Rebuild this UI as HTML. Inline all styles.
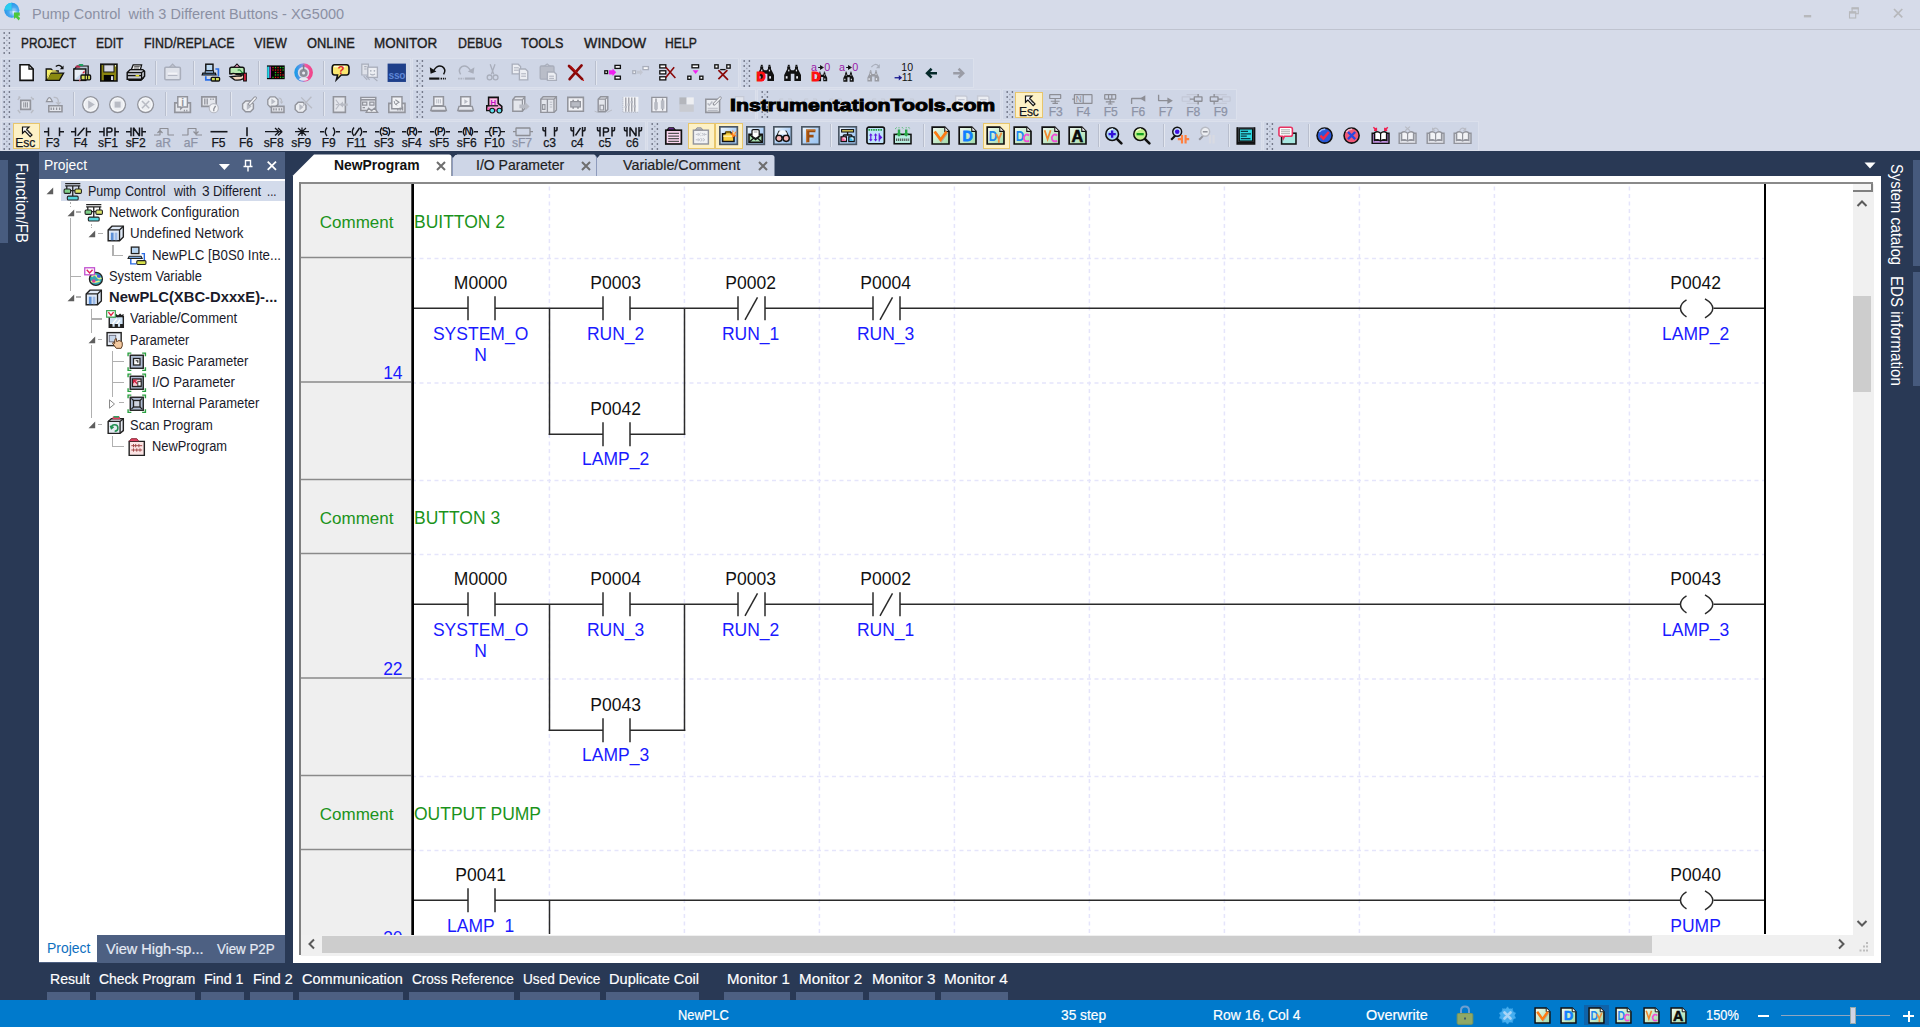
<!DOCTYPE html><html><head><meta charset="utf-8"><title>XG5000</title><style>
html,body{margin:0;padding:0;}
body{width:1920px;height:1027px;overflow:hidden;background:#d6dbe9;font-family:"Liberation Sans",sans-serif;position:relative;}
.t{position:absolute;white-space:nowrap;line-height:1;}
.c{position:absolute;white-space:nowrap;line-height:1;text-align:center;}
svg{position:absolute;overflow:visible;}
</style></head><body>
<div class="t" style="left:31.70px;top:7.1px;font-size:14.8px;color:#8b90a3;transform-origin:0 0;transform:scaleX(0.9788);">Pump Control&nbsp; with 3 Different Buttons - XG5000</div>
<svg style="left:3px;top:1px" width="20" height="21" viewBox="0 0 20 21"><defs><radialGradient id="gl" cx="0.62" cy="0.62" r="0.7"><stop offset="0" stop-color="#e8f4ff"/><stop offset="0.45" stop-color="#4aa8f0"/><stop offset="1" stop-color="#1a90e8"/></radialGradient></defs><circle cx="8.800" cy="9.200" r="7.500" fill="url(#gl)"/><path d="M8.800 1.700 A7.500 7.500 0 0 0 1.300 9.200 L8.800 9.200 Z" fill="#28d8f0" opacity="0.800"/><path d="M8.800 1.700 V16.700 M1.300 9.200 H16.300" stroke="#3aa0e8" stroke-width="0.600" opacity="0.700"/><path d="M11 11.500 h5.800 v3.200 h-2 l2.300 2.300 -1.300 2.500 -3 -3 -1.800 1.500z" fill="#4cc83c"/></svg>
<svg style="left:1790px;top:0" width="130" height="29" viewBox="0 0 130 29"><rect x="13.900" y="15" width="7.300" height="2.400" fill="#b7b8bc"/><rect x="62.100" y="8" width="6.200" height="5.700" fill="none" stroke="#b7b8bc" stroke-width="1.100"/><rect x="61.600" y="7.400" width="7.200" height="2" fill="#b7b8bc"/><rect x="59.500" y="12" width="6.200" height="6" fill="#d6dbe9" stroke="#b7b8bc" stroke-width="1.100"/><rect x="59" y="11.400" width="7.200" height="2.200" fill="#b7b8bc"/><path d="M104 9 l8.300 8.300 M112.300 9 l-8.300 8.300" stroke="#b7b8bc" stroke-width="1.700"/></svg>
<div style="position:absolute;left:0px;top:28.8px;width:1920px;height:1.2px;background:#bfc3cf;"></div>
<div class="t" style="left:21.00px;top:35.6px;font-size:14.3px;color:#1e1e1e;transform-origin:0 0;transform:scaleX(0.8271);-webkit-text-stroke:0.4px #1e1e1e;">PROJECT</div>
<div class="t" style="left:96.30px;top:35.6px;font-size:14.3px;color:#1e1e1e;transform-origin:0 0;transform:scaleX(0.8431);-webkit-text-stroke:0.4px #1e1e1e;">EDIT</div>
<div class="t" style="left:144.00px;top:35.6px;font-size:14.3px;color:#1e1e1e;transform-origin:0 0;transform:scaleX(0.8704);-webkit-text-stroke:0.4px #1e1e1e;">FIND/REPLACE</div>
<div class="t" style="left:254.00px;top:35.6px;font-size:14.3px;color:#1e1e1e;transform-origin:0 0;transform:scaleX(0.8959);-webkit-text-stroke:0.4px #1e1e1e;">VIEW</div>
<div class="t" style="left:306.70px;top:35.6px;font-size:14.3px;color:#1e1e1e;transform-origin:0 0;transform:scaleX(0.8981);-webkit-text-stroke:0.4px #1e1e1e;">ONLINE</div>
<div class="t" style="left:374.30px;top:35.6px;font-size:14.3px;color:#1e1e1e;transform-origin:0 0;transform:scaleX(0.9403);-webkit-text-stroke:0.4px #1e1e1e;">MONITOR</div>
<div class="t" style="left:457.70px;top:35.6px;font-size:14.3px;color:#1e1e1e;transform-origin:0 0;transform:scaleX(0.8670);-webkit-text-stroke:0.4px #1e1e1e;">DEBUG</div>
<div class="t" style="left:521.00px;top:35.6px;font-size:14.3px;color:#1e1e1e;transform-origin:0 0;transform:scaleX(0.8812);-webkit-text-stroke:0.4px #1e1e1e;">TOOLS</div>
<div class="t" style="left:584.00px;top:35.6px;font-size:14.3px;color:#1e1e1e;transform-origin:0 0;transform:scaleX(0.9920);-webkit-text-stroke:0.4px #1e1e1e;">WINDOW</div>
<div class="t" style="left:665.00px;top:35.6px;font-size:14.3px;color:#1e1e1e;transform-origin:0 0;transform:scaleX(0.8510);-webkit-text-stroke:0.4px #1e1e1e;">HELP</div>
<svg style="left:3.3px;top:32px" width="8" height="23" viewBox="0 0 8 23"><rect x="0.500" y="0.3" width="1.400" height="1.400" fill="#4d5263"/><rect x="5.700" y="0.3" width="1.400" height="1.400" fill="#4d5263"/><rect x="3.100" y="2.8" width="1.400" height="1.400" fill="#9ea4b4"/><rect x="0.500" y="5.3" width="1.400" height="1.400" fill="#4d5263"/><rect x="5.700" y="5.3" width="1.400" height="1.400" fill="#4d5263"/><rect x="3.100" y="7.8" width="1.400" height="1.400" fill="#9ea4b4"/><rect x="0.500" y="10.3" width="1.400" height="1.400" fill="#4d5263"/><rect x="5.700" y="10.3" width="1.400" height="1.400" fill="#4d5263"/><rect x="3.100" y="12.8" width="1.400" height="1.400" fill="#9ea4b4"/><rect x="0.500" y="15.3" width="1.400" height="1.400" fill="#4d5263"/><rect x="5.700" y="15.3" width="1.400" height="1.400" fill="#4d5263"/><rect x="3.100" y="17.8" width="1.400" height="1.400" fill="#9ea4b4"/><rect x="0.500" y="20.3" width="1.400" height="1.400" fill="#4d5263"/><rect x="5.700" y="20.3" width="1.400" height="1.400" fill="#4d5263"/></svg>
<div style="position:absolute;left:2px;top:59px;width:408px;height:28px;background:#cfd6e6;box-shadow:0 0 0 1px #dbe0ec;"></div>
<svg style="left:3px;top:60px" width="8" height="27" viewBox="0 0 8 27"><rect x="0.500" y="0.3" width="1.400" height="1.400" fill="#4d5263"/><rect x="5.700" y="0.3" width="1.400" height="1.400" fill="#4d5263"/><rect x="3.100" y="2.8" width="1.400" height="1.400" fill="#9ea4b4"/><rect x="0.500" y="5.3" width="1.400" height="1.400" fill="#4d5263"/><rect x="5.700" y="5.3" width="1.400" height="1.400" fill="#4d5263"/><rect x="3.100" y="7.8" width="1.400" height="1.400" fill="#9ea4b4"/><rect x="0.500" y="10.3" width="1.400" height="1.400" fill="#4d5263"/><rect x="5.700" y="10.3" width="1.400" height="1.400" fill="#4d5263"/><rect x="3.100" y="12.8" width="1.400" height="1.400" fill="#9ea4b4"/><rect x="0.500" y="15.3" width="1.400" height="1.400" fill="#4d5263"/><rect x="5.700" y="15.3" width="1.400" height="1.400" fill="#4d5263"/><rect x="3.100" y="17.8" width="1.400" height="1.400" fill="#9ea4b4"/><rect x="0.500" y="20.3" width="1.400" height="1.400" fill="#4d5263"/><rect x="5.700" y="20.3" width="1.400" height="1.400" fill="#4d5263"/><rect x="3.100" y="22.8" width="1.400" height="1.400" fill="#9ea4b4"/><rect x="0.500" y="25.3" width="1.400" height="1.400" fill="#4d5263"/><rect x="5.700" y="25.3" width="1.400" height="1.400" fill="#4d5263"/></svg>
<svg style="left:17.2px;top:63.2px" width="19.2" height="19.2" viewBox="0 0 16 16"><path d="M2.500 1.500 H10 L13.500 5 V14.500 H2.500z" fill="#fff" stroke="#111" stroke-width="1.300"/><path d="M10 1.500 V5 H13.500" fill="none" stroke="#111" stroke-width="1.100"/></svg>
<svg style="left:45.0px;top:63.2px" width="19.2" height="19.2" viewBox="0 0 16 16"><path d="M1 14.500 V5 H5 L6.500 6.500 H11 V8" fill="#f7f06a" stroke="#111" stroke-width="1.100"/><path d="M1 14.500 L4.500 8.500 H15.500 L12 14.500z" fill="#8a8a10" stroke="#111" stroke-width="1.100"/><path d="M2 13 L5 6.500 H9" fill="none" stroke="#f7f06a" stroke-width="1"/><path d="M9 3 Q12 0.500 14.500 4" fill="none" stroke="#111" stroke-width="1.100"/><path d="M15.500 2 V5.300 H12.300z" fill="#111"/></svg>
<svg style="left:72.4px;top:63.2px" width="19.2" height="19.2" viewBox="0 0 16 16"><path d="M2 5 L4.500 2.500 H13.500 V12" fill="#b9c6d6" stroke="#111" stroke-width="1"/><rect x="1.500" y="5" width="10" height="9.500" fill="#e8eef6" stroke="#111" stroke-width="1.200"/><path d="M2.500 13.500 L10.500 6 V13.500z" fill="#c8d8ee"/><path d="M10.500 6 L8.500 8.500 H10.500z" fill="#e02030"/><rect x="3" y="2" width="4" height="2" rx="1" fill="#b03050"/><rect x="5.500" y="0.800" width="4" height="1.600" rx="0.800" fill="#20a060"/><rect x="7.500" y="10" width="8" height="4" rx="0.800" fill="#d6e05a" stroke="#111" stroke-width="1.100"/><path d="M11 10 V14 M13 10 V14" stroke="#111" stroke-width="0.900"/><path d="M6.500 13 V15.500" stroke="#f08090" stroke-width="0.800"/></svg>
<svg style="left:99.2px;top:63.2px" width="19.2" height="19.2" viewBox="0 0 16 16"><rect x="1.500" y="1" width="13.500" height="14" fill="#8a8410" stroke="#111" stroke-width="1.300"/><rect x="4" y="1.500" width="8.500" height="6" fill="#d9dbe6" stroke="#111" stroke-width="0.800"/><rect x="4" y="10" width="8.500" height="5" fill="#050505"/><rect x="10" y="11" width="1.800" height="3.200" fill="#d9dbe6"/><rect x="13.300" y="1.800" width="0.900" height="1.100" fill="#fff"/></svg>
<svg style="left:126.4px;top:63.2px" width="19.2" height="19.2" viewBox="0 0 16 16"><path d="M4.500 5.500 L6 1.500 H13 L12 5.500z" fill="#fff" stroke="#111" stroke-width="1.100"/><path d="M6.800 3 H11.500 M6.500 4.200 H11" stroke="#555" stroke-width="0.800"/><path d="M1 8 L3.500 5.500 H14 L15.500 7 V11 L13 13.500 H1z" fill="#c6c9d2" stroke="#111" stroke-width="1.200"/><path d="M1 8 H13 V13.500 M13 8 L15.500 6.500" fill="none" stroke="#111" stroke-width="1"/><path d="M1 10.500 H13" stroke="#111" stroke-width="1.100"/><rect x="8" y="10" width="3" height="1.200" fill="#e8e020"/><path d="M2 14.500 H12.500 L15 12" fill="none" stroke="#111" stroke-width="1.100"/></svg>
<svg style="left:163.4px;top:63.2px" width="19.2" height="19.2" viewBox="0 0 16 16"><rect x="1.500" y="3.500" width="13" height="10.500" rx="1" fill="#dfe2ea" stroke="#a9aebb" stroke-width="1.300"/><path d="M5.500 3.500 L8 1 L10.500 3.500z" fill="#c3c7d2" stroke="#a9aebb" stroke-width="1"/><path d="M4 9 H12" stroke="#f2f3f7" stroke-width="2"/><path d="M4 10.300 H12" stroke="#a9aebb" stroke-width="0.800"/></svg>
<svg style="left:201.0px;top:63.2px" width="19.2" height="19.2" viewBox="0 0 16 16"><path d="M4 11 V14 H9 M12 5 H14.500 V11" fill="none" stroke="#2a6fe8" stroke-width="1.400"/><rect x="4" y="1" width="6" height="5.500" fill="#bcd9f2" stroke="#111" stroke-width="1.200"/><path d="M1.500 8.500 H12 L12.500 10 H1z" fill="#5a8fc8" stroke="#111" stroke-width="1"/><path d="M3.500 6.500 H10.500 V8.500 H3.500z" fill="#9fc3ea" stroke="#111" stroke-width="0.800"/><rect x="8.500" y="12" width="7" height="3" rx="0.800" fill="#d6e05a" stroke="#111" stroke-width="1.100"/><path d="M12 12 V15" stroke="#111" stroke-width="0.900"/></svg>
<svg style="left:228.4px;top:63.2px" width="19.2" height="19.2" viewBox="0 0 16 16"><path d="M1.500 5 Q1.500 3.500 3 3.500 H12 Q13.500 3.500 13.500 5 V9 H1.500z" fill="#b8e8b0" stroke="#111" stroke-width="1.200"/><path d="M5 3.500 L7.500 0.800 L10 3.500z" fill="#f0a0c0" stroke="#111" stroke-width="0.900"/><path d="M2 9 Q5 8 7 9.500 H10 Q11.500 9.500 11 11 H8 M11 10.500 L13 9.500 V13 Q9 15 5.500 14 L2 11.500z" fill="#f6d8c0" stroke="#111" stroke-width="1.100"/><path d="M8 6 Q10 5 11 7 T13 7" fill="none" stroke="#2a8a40" stroke-width="1"/><rect x="13" y="8.500" width="2.300" height="6.500" fill="#e02040" stroke="#111" stroke-width="0.900"/></svg>
<svg style="left:266.0px;top:63.2px" width="19.2" height="19.2" viewBox="0 0 16 16"><rect x="0.800" y="2" width="14.800" height="11.500" fill="#050505"/><rect x="1" y="3" width="1.800" height="9.500" fill="#20d8e8"/><rect x="3" y="3" width="1" height="9.500" fill="#d040d0"/><rect x="5.30" y="3.30" width="1.050" height="1.050" fill="#e81818"/><rect x="7.40" y="3.30" width="1.050" height="1.050" fill="#20c820"/><rect x="9.50" y="3.30" width="1.050" height="1.050" fill="#e81818"/><rect x="11.60" y="3.30" width="1.050" height="1.050" fill="#20c820"/><rect x="13.70" y="3.30" width="1.050" height="1.050" fill="#20c820"/><rect x="5.30" y="5.35" width="1.050" height="1.050" fill="#e81818"/><rect x="7.40" y="5.35" width="1.050" height="1.050" fill="#e81818"/><rect x="9.50" y="5.35" width="1.050" height="1.050" fill="#e81818"/><rect x="11.60" y="5.35" width="1.050" height="1.050" fill="#e81818"/><rect x="13.70" y="5.35" width="1.050" height="1.050" fill="#20c820"/><rect x="5.30" y="7.40" width="1.050" height="1.050" fill="#050505"/><rect x="7.40" y="7.40" width="1.050" height="1.050" fill="#20c820"/><rect x="9.50" y="7.40" width="1.050" height="1.050" fill="#e81818"/><rect x="11.60" y="7.40" width="1.050" height="1.050" fill="#e81818"/><rect x="13.70" y="7.40" width="1.050" height="1.050" fill="#050505"/><rect x="5.30" y="9.45" width="1.050" height="1.050" fill="#050505"/><rect x="7.40" y="9.45" width="1.050" height="1.050" fill="#20c820"/><rect x="9.50" y="9.45" width="1.050" height="1.050" fill="#20c820"/><rect x="11.60" y="9.45" width="1.050" height="1.050" fill="#e81818"/><rect x="13.70" y="9.45" width="1.050" height="1.050" fill="#e81818"/><rect x="5.30" y="11.50" width="1.050" height="1.050" fill="#20c820"/><rect x="7.40" y="11.50" width="1.050" height="1.050" fill="#e81818"/><rect x="9.50" y="11.50" width="1.050" height="1.050" fill="#e81818"/><rect x="11.60" y="11.50" width="1.050" height="1.050" fill="#20c820"/><rect x="13.70" y="11.50" width="1.050" height="1.050" fill="#20c820"/></svg>
<svg style="left:294.1px;top:63.2px" width="19.2" height="19.2" viewBox="0 0 16 16"><defs><linearGradient id="rg" x1="0" x2="1" y1="0" y2="0"><stop offset="0" stop-color="#1e9be8"/><stop offset="0.45" stop-color="#8d8fe0"/><stop offset="0.62" stop-color="#f05aa0"/><stop offset="1" stop-color="#f0468c"/></linearGradient></defs><circle cx="8" cy="8" r="6.300" fill="#d8dde8" stroke="url(#rg)" stroke-width="3"/><path d="M4 13.800 Q8 16 12 13.800 L11 12.500 H5z" fill="#e6e9f0"/><circle cx="8" cy="8.300" r="3.400" fill="#8b8e98"/><circle cx="8" cy="8.300" r="1.300" fill="#e8ebf2"/><path d="M8 1.500 V6" stroke="#7a7d88" stroke-width="1.300"/></svg>
<svg style="left:331.0px;top:63.2px" width="19.2" height="19.2" viewBox="0 0 16 16"><path d="M3 1.500 H13 Q15 1.500 15 4 V7.500 Q15 10 13 10 H8.500 L4.500 14 L5.500 10 H3 Q1 10 1 7.500 V4 Q1 1.500 3 1.500z" fill="#fbe870" stroke="#111" stroke-width="1.300"/><path d="M2.500 3 H12" stroke="#fffbe0" stroke-width="1.200"/><text x="8.3" y="9" font-family="Liberation Sans, sans-serif" font-size="9.5" fill="#e02828" text-anchor="middle" font-weight="bold">?</text></svg>
<svg style="left:359.8px;top:63.2px" width="19.2" height="19.2" viewBox="0 0 16 16"><path d="M1.500 1 H7 V10 H1.500z M3.500 3 H5.500 M3.500 5 H5.500" fill="#dfe2ea" stroke="#a9aebb" stroke-width="1"/><rect x="6.500" y="3.500" width="8" height="8.500" fill="#eceef3" stroke="#a9aebb" stroke-width="1.100"/><circle cx="9" cy="6.500" r="0.700" fill="#a9aebb"/><circle cx="12" cy="6.500" r="0.700" fill="#a9aebb"/><path d="M8.500 9 Q10.500 10.800 12.500 9" fill="none" stroke="#a9aebb" stroke-width="0.900"/><path d="M3 11 L6 14 M5 11 L8 14 M11 12 L14.500 15" stroke="#a9aebb" stroke-width="0.900"/></svg>
<svg style="left:387.3px;top:63.2px" width="19.2" height="19.2" viewBox="0 0 16 16"><rect x="0.500" y="0.500" width="15.300" height="15.300" fill="#1e3f8a"/><text x="8.2" y="13" font-family="Liberation Sans, sans-serif" font-size="8.5" fill="#5f86d6" text-anchor="middle" font-weight="bold" letter-spacing="-0.3">sso</text></svg>
<div style="position:absolute;left:155.0px;top:61px;width:1px;height:24px;background:#b9bfce;"></div>
<div style="position:absolute;left:156.0px;top:61px;width:1px;height:24px;background:#e3e7f0;"></div>
<div style="position:absolute;left:192.7px;top:61px;width:1px;height:24px;background:#b9bfce;"></div>
<div style="position:absolute;left:193.7px;top:61px;width:1px;height:24px;background:#e3e7f0;"></div>
<div style="position:absolute;left:257.5px;top:61px;width:1px;height:24px;background:#b9bfce;"></div>
<div style="position:absolute;left:258.5px;top:61px;width:1px;height:24px;background:#e3e7f0;"></div>
<div style="position:absolute;left:322.5px;top:61px;width:1px;height:24px;background:#b9bfce;"></div>
<div style="position:absolute;left:323.5px;top:61px;width:1px;height:24px;background:#e3e7f0;"></div>
<div style="position:absolute;left:413px;top:59px;width:324.5px;height:28px;background:#cfd6e6;box-shadow:0 0 0 1px #dbe0ec;"></div>
<svg style="left:416px;top:60px" width="8" height="27" viewBox="0 0 8 27"><rect x="0.500" y="0.3" width="1.400" height="1.400" fill="#4d5263"/><rect x="5.700" y="0.3" width="1.400" height="1.400" fill="#4d5263"/><rect x="3.100" y="2.8" width="1.400" height="1.400" fill="#9ea4b4"/><rect x="0.500" y="5.3" width="1.400" height="1.400" fill="#4d5263"/><rect x="5.700" y="5.3" width="1.400" height="1.400" fill="#4d5263"/><rect x="3.100" y="7.8" width="1.400" height="1.400" fill="#9ea4b4"/><rect x="0.500" y="10.3" width="1.400" height="1.400" fill="#4d5263"/><rect x="5.700" y="10.3" width="1.400" height="1.400" fill="#4d5263"/><rect x="3.100" y="12.8" width="1.400" height="1.400" fill="#9ea4b4"/><rect x="0.500" y="15.3" width="1.400" height="1.400" fill="#4d5263"/><rect x="5.700" y="15.3" width="1.400" height="1.400" fill="#4d5263"/><rect x="3.100" y="17.8" width="1.400" height="1.400" fill="#9ea4b4"/><rect x="0.500" y="20.3" width="1.400" height="1.400" fill="#4d5263"/><rect x="5.700" y="20.3" width="1.400" height="1.400" fill="#4d5263"/><rect x="3.100" y="22.8" width="1.400" height="1.400" fill="#9ea4b4"/><rect x="0.500" y="25.3" width="1.400" height="1.400" fill="#4d5263"/><rect x="5.700" y="25.3" width="1.400" height="1.400" fill="#4d5263"/></svg>
<svg style="left:428.4px;top:63.2px" width="19.2" height="19.2" viewBox="0 0 16 16"><path d="M4.500 6.500 Q8 1 12 3 Q15.500 5.500 13 9.500" fill="none" stroke="#111" stroke-width="1.200"/><path d="M1.500 3.500 L2.200 9 L7 7z" fill="#111"/><path d="M1 13 H9.500" stroke="#111" stroke-width="1.800"/><path d="M10.500 13 H15" stroke="#111" stroke-width="1.400" stroke-dasharray="1.200 0.700"/></svg>
<svg style="left:456.9px;top:63.2px" width="19.2" height="19.2" viewBox="0 0 16 16"><path d="M11.500 6.500 Q8 1 4 3 Q0.500 5.500 3 9.500" fill="none" stroke="#a9aebb" stroke-width="1.200"/><path d="M14.500 3.500 L13.800 9 L9 7z" fill="#a9aebb"/><path d="M6.500 13 H15" stroke="#a9aebb" stroke-width="1.800"/><path d="M1 13 H5.500" stroke="#a9aebb" stroke-width="1.400" stroke-dasharray="1.200 0.700"/></svg>
<svg style="left:483.4px;top:63.2px" width="19.2" height="19.2" viewBox="0 0 16 16"><path d="M6 1 L9 9.500 M10 1 L7 9.500" stroke="#a9aebb" stroke-width="1.100" fill="none"/><circle cx="5.500" cy="12" r="2" fill="none" stroke="#a9aebb" stroke-width="1.100"/><circle cx="10.500" cy="12" r="2" fill="none" stroke="#a9aebb" stroke-width="1.100"/></svg>
<svg style="left:511.0px;top:63.2px" width="19.2" height="19.2" viewBox="0 0 16 16"><path d="M1 1 H6 L8 3 V9 H1z" fill="#eceef3" stroke="#a9aebb" stroke-width="1.100"/><path d="M2.500 4 H6.500 M2.500 6 H6.500" stroke="#a9aebb" stroke-width="0.800"/><path d="M7 5 H12 L14 7 V14 H7z" fill="#eceef3" stroke="#a9aebb" stroke-width="1.100"/><path d="M8.500 9 H12.500 M8.500 11 H12.500" stroke="#a9aebb" stroke-width="0.800"/></svg>
<svg style="left:538.8px;top:63.2px" width="19.2" height="19.2" viewBox="0 0 16 16"><rect x="1" y="2.500" width="11.500" height="11" rx="1" fill="#b9bdc8" stroke="#a9aebb" stroke-width="1.100"/><path d="M4.500 2.500 L6.800 0.800 L9 2.500z" fill="#dfe2ea" stroke="#a9aebb" stroke-width="0.900"/><path d="M7 7.500 H12.500 L14.500 9.500 V14.500 H7z" fill="#eceef3" stroke="#a9aebb" stroke-width="1.100"/><path d="M8.500 11 H12.500 M8.500 12.800 H12.500" stroke="#a9aebb" stroke-width="0.800"/></svg>
<svg style="left:566.4px;top:63.2px" width="19.2" height="19.2" viewBox="0 0 16 16"><path d="M2.500 2.500 L13.500 13.500 M13 2 L3 13.500" stroke="#8a0808" stroke-width="2.200" stroke-linecap="round" fill="none"/><path d="M3.500 2.500 L9 8" stroke="#b01010" stroke-width="1.200"/><circle cx="14.500" cy="14.500" r="0.600" fill="#d02020"/></svg>
<svg style="left:603.4px;top:63.2px" width="19.2" height="19.2" viewBox="0 0 16 16"><rect x="1.5" y="6.5" width="2.3" height="2.3" fill="#fff" stroke="#111" stroke-width="1.100"/><rect x="10" y="2" width="4.5" height="2.5" fill="#fff" stroke="#111" stroke-width="1.100"/><rect x="10" y="11" width="4.5" height="2.5" fill="#fff" stroke="#111" stroke-width="1.100"/><path d="M5 6 H8 V4.500 L11 7.800 L8 11 V9.500 H5z" fill="#f020f0"/></svg>
<svg style="left:631.0px;top:63.2px" width="19.2" height="19.2" viewBox="0 0 16 16"><rect x="1.5" y="6.5" width="2.3" height="2.3" fill="#fff" stroke="#a9aebb" stroke-width="1.100"/><rect x="10" y="3" width="4.5" height="2.5" fill="#fff" stroke="#a9aebb" stroke-width="1.100"/><path d="M5 6.500 H7.500 V5 L10 7.800 L7.500 10.500 V9 H5z" fill="#c3c7d2"/></svg>
<svg style="left:657.9px;top:63.2px" width="19.2" height="19.2" viewBox="0 0 16 16"><rect x="1.5" y="1.5" width="5" height="2.6" fill="#fff" stroke="#111" stroke-width="1.100"/><rect x="1.5" y="6.5" width="5" height="2.6" fill="#fff" stroke="#111" stroke-width="1.100"/><rect x="1.5" y="11.5" width="5" height="2.6" fill="#fff" stroke="#111" stroke-width="1.100"/><path d="M6.500 3.500 L14.500 12.500 M13.500 3.500 L6.500 12" stroke="#8a0808" stroke-width="1.300"/></svg>
<svg style="left:686.0px;top:63.2px" width="19.2" height="19.2" viewBox="0 0 16 16"><rect x="5" y="1.5" width="5.5" height="2.5" fill="#fff" stroke="#111" stroke-width="1.100"/><rect x="1.5" y="11" width="2.6" height="2.6" fill="#fff" stroke="#111" stroke-width="1.100"/><rect x="11.5" y="11" width="2.6" height="2.6" fill="#fff" stroke="#111" stroke-width="1.100"/><path d="M5.500 6 H10.500 L8 9.200z" fill="#f020f0"/></svg>
<svg style="left:713.4px;top:63.2px" width="19.2" height="19.2" viewBox="0 0 16 16"><rect x="1.5" y="1.5" width="2.8" height="2.8" fill="#fff" stroke="#111" stroke-width="1.100"/><rect x="11.5" y="1.5" width="2.8" height="2.8" fill="#fff" stroke="#111" stroke-width="1.100"/><path d="M6 5.500 H10.500" stroke="#111" stroke-width="1.100"/><path d="M4.500 6 L12.500 14 M12 6 L4.500 13.500" stroke="#8a0808" stroke-width="1.400"/></svg>
<div style="position:absolute;left:595.1px;top:61px;width:1px;height:24px;background:#b9bfce;"></div>
<div style="position:absolute;left:596.1px;top:61px;width:1px;height:24px;background:#e3e7f0;"></div>
<div style="position:absolute;left:740.5px;top:59px;width:232.0px;height:28px;background:#cfd6e6;box-shadow:0 0 0 1px #dbe0ec;"></div>
<svg style="left:743px;top:60px" width="8" height="27" viewBox="0 0 8 27"><rect x="0.500" y="0.3" width="1.400" height="1.400" fill="#4d5263"/><rect x="5.700" y="0.3" width="1.400" height="1.400" fill="#4d5263"/><rect x="3.100" y="2.8" width="1.400" height="1.400" fill="#9ea4b4"/><rect x="0.500" y="5.3" width="1.400" height="1.400" fill="#4d5263"/><rect x="5.700" y="5.3" width="1.400" height="1.400" fill="#4d5263"/><rect x="3.100" y="7.8" width="1.400" height="1.400" fill="#9ea4b4"/><rect x="0.500" y="10.3" width="1.400" height="1.400" fill="#4d5263"/><rect x="5.700" y="10.3" width="1.400" height="1.400" fill="#4d5263"/><rect x="3.100" y="12.8" width="1.400" height="1.400" fill="#9ea4b4"/><rect x="0.500" y="15.3" width="1.400" height="1.400" fill="#4d5263"/><rect x="5.700" y="15.3" width="1.400" height="1.400" fill="#4d5263"/><rect x="3.100" y="17.8" width="1.400" height="1.400" fill="#9ea4b4"/><rect x="0.500" y="20.3" width="1.400" height="1.400" fill="#4d5263"/><rect x="5.700" y="20.3" width="1.400" height="1.400" fill="#4d5263"/><rect x="3.100" y="22.8" width="1.400" height="1.400" fill="#9ea4b4"/><rect x="0.500" y="25.3" width="1.400" height="1.400" fill="#4d5263"/><rect x="5.700" y="25.3" width="1.400" height="1.400" fill="#4d5263"/></svg>
<svg style="left:756.0px;top:63.2px" width="19.2" height="19.2" viewBox="0 0 16 16"><g transform="translate(0 0) scale(1.0)"><path d="M3.500 3 H6 V5 L7 6 H9 L10 5 V3 H12.500 V5 L15 10 V15 H9.500 V9 H6.500 V15 H1 V10 L3.500 5z" fill="#111"/><rect x="4" y="1.500" width="1.600" height="1.500" fill="#111"/><rect x="10.400" y="1.500" width="1.600" height="1.500" fill="#111"/><rect x="2.300" y="11" width="1.500" height="2" fill="#e9ecf3"/><rect x="11" y="11" width="1.500" height="2" fill="#e9ecf3"/><rect x="4.300" y="5.500" width="1" height="1.500" fill="#e9ecf3"/><rect x="10.700" y="5.500" width="1" height="1.500" fill="#e9ecf3"/></g><text x="4.3" y="15.3" font-family="Liberation Sans, sans-serif" font-size="10.5" fill="#ff1010" text-anchor="middle" font-weight="bold" stroke="#ff1010" stroke-width="0.900" font-family="Liberation Serif, serif">D</text></svg>
<svg style="left:783.4px;top:63.2px" width="19.2" height="19.2" viewBox="0 0 16 16"><g transform="translate(0 0) scale(1.0)"><path d="M3.500 3 H6 V5 L7 6 H9 L10 5 V3 H12.500 V5 L15 10 V15 H9.500 V9 H6.500 V15 H1 V10 L3.500 5z" fill="#111"/><rect x="4" y="1.500" width="1.600" height="1.500" fill="#111"/><rect x="10.400" y="1.500" width="1.600" height="1.500" fill="#111"/><rect x="2.300" y="11" width="1.500" height="2" fill="#e9ecf3"/><rect x="11" y="11" width="1.500" height="2" fill="#e9ecf3"/><rect x="4.300" y="5.500" width="1" height="1.500" fill="#e9ecf3"/><rect x="10.700" y="5.500" width="1" height="1.500" fill="#e9ecf3"/></g></svg>
<svg style="left:811.4px;top:63.2px" width="19.2" height="19.2" viewBox="0 0 16 16"><g transform="translate(4.5 6.3) scale(0.6)"><path d="M3.500 3 H6 V5 L7 6 H9 L10 5 V3 H12.500 V5 L15 10 V15 H9.500 V9 H6.500 V15 H1 V10 L3.500 5z" fill="#111"/><rect x="4" y="1.500" width="1.600" height="1.500" fill="#111"/><rect x="10.400" y="1.500" width="1.600" height="1.500" fill="#111"/><rect x="2.300" y="11" width="1.500" height="2" fill="#e9ecf3"/><rect x="11" y="11" width="1.500" height="2" fill="#e9ecf3"/><rect x="4.300" y="5.500" width="1" height="1.500" fill="#e9ecf3"/><rect x="10.700" y="5.500" width="1" height="1.500" fill="#e9ecf3"/></g><text x="4" y="15.3" font-family="Liberation Sans, sans-serif" font-size="10" fill="#ff1010" text-anchor="middle" font-weight="bold" stroke="#ff1010" stroke-width="0.900" font-family="Liberation Serif, serif">D</text><text x="2.6" y="6.3" font-family="Liberation Sans, sans-serif" font-size="9" fill="#9a1aa8" text-anchor="middle" >a</text><text x="13.6" y="6.3" font-family="Liberation Sans, sans-serif" font-size="9" fill="#9a1aa8" text-anchor="middle" >0</text><path d="M6 3.800 H8.500 M8 2.500 L10 3.800 L8 5.100z" stroke="#111" stroke-width="0.900" fill="#111"/></svg>
<svg style="left:839.1px;top:63.2px" width="19.2" height="19.2" viewBox="0 0 16 16"><g transform="translate(3 6.3) scale(0.62)"><path d="M3.500 3 H6 V5 L7 6 H9 L10 5 V3 H12.500 V5 L15 10 V15 H9.500 V9 H6.500 V15 H1 V10 L3.500 5z" fill="#111"/><rect x="4" y="1.500" width="1.600" height="1.500" fill="#111"/><rect x="10.400" y="1.500" width="1.600" height="1.500" fill="#111"/><rect x="2.300" y="11" width="1.500" height="2" fill="#e9ecf3"/><rect x="11" y="11" width="1.500" height="2" fill="#e9ecf3"/><rect x="4.300" y="5.500" width="1" height="1.500" fill="#e9ecf3"/><rect x="10.700" y="5.500" width="1" height="1.500" fill="#e9ecf3"/></g><text x="2.6" y="6.3" font-family="Liberation Sans, sans-serif" font-size="9" fill="#9a1aa8" text-anchor="middle" >a</text><text x="13.6" y="6.3" font-family="Liberation Sans, sans-serif" font-size="9" fill="#9a1aa8" text-anchor="middle" >0</text><path d="M6 3.800 H8.500 M8 2.500 L10 3.800 L8 5.100z" stroke="#111" stroke-width="0.900" fill="#111"/></svg>
<svg style="left:866.4px;top:63.2px" width="19.2" height="19.2" viewBox="0 0 16 16"><g transform="translate(0.5 5) scale(0.7)"><path d="M3.500 3 H6 V5 L7 6 H9 L10 5 V3 H12.500 V5 L15 10 V15 H9.500 V9 H6.500 V15 H1 V10 L3.500 5z" fill="#9a9ca4"/><rect x="4" y="1.500" width="1.600" height="1.500" fill="#9a9ca4"/><rect x="10.400" y="1.500" width="1.600" height="1.500" fill="#9a9ca4"/><rect x="2.300" y="11" width="1.500" height="2" fill="#e9ecf3"/><rect x="11" y="11" width="1.500" height="2" fill="#e9ecf3"/><rect x="4.300" y="5.500" width="1" height="1.500" fill="#e9ecf3"/><rect x="10.700" y="5.500" width="1" height="1.500" fill="#e9ecf3"/></g><path d="M4.500 3.500 Q7.500 -0.500 10.500 2.500" fill="none" stroke="#a9aebb" stroke-width="1"/><path d="M11.500 0.800 V4.300 H8.300z" fill="#a9aebb"/></svg>
<svg style="left:894.4px;top:63.2px" width="19.2" height="19.2" viewBox="0 0 16 16"><text x="11" y="6.8" font-family="Liberation Sans, sans-serif" font-size="8.8" fill="#111" text-anchor="middle" >10</text><text x="11" y="15.3" font-family="Liberation Sans, sans-serif" font-size="8.8" fill="#111" text-anchor="middle" >11</text><path d="M0.500 12.300 H5.500" stroke="#1a1a90" stroke-width="1.100"/><path d="M4 10.100 L6.800 12.300 L4 14.500z" fill="#1a1a90"/></svg>
<svg style="left:921.9px;top:63.2px" width="19.2" height="19.2" viewBox="0 0 16 16"><path d="M12.500 8.500 H5 M8 4.800 L4.200 8.500 L8 12.200" fill="none" stroke="#062a2a" stroke-width="2.100"/></svg>
<svg style="left:949.1px;top:63.2px" width="19.2" height="19.2" viewBox="0 0 16 16"><path d="M3.500 8.500 H11 M8 4.800 L11.800 8.500 L8 12.200" fill="none" stroke="#9a9ca6" stroke-width="2.100"/></svg>
<div style="position:absolute;left:2px;top:90px;width:408px;height:28.5px;background:#cfd6e6;box-shadow:0 0 0 1px #dbe0ec;"></div>
<svg style="left:3px;top:91px" width="8" height="27" viewBox="0 0 8 27"><rect x="0.500" y="0.3" width="1.400" height="1.400" fill="#4d5263"/><rect x="5.700" y="0.3" width="1.400" height="1.400" fill="#4d5263"/><rect x="3.100" y="2.8" width="1.400" height="1.400" fill="#9ea4b4"/><rect x="0.500" y="5.3" width="1.400" height="1.400" fill="#4d5263"/><rect x="5.700" y="5.3" width="1.400" height="1.400" fill="#4d5263"/><rect x="3.100" y="7.8" width="1.400" height="1.400" fill="#9ea4b4"/><rect x="0.500" y="10.3" width="1.400" height="1.400" fill="#4d5263"/><rect x="5.700" y="10.3" width="1.400" height="1.400" fill="#4d5263"/><rect x="3.100" y="12.8" width="1.400" height="1.400" fill="#9ea4b4"/><rect x="0.500" y="15.3" width="1.400" height="1.400" fill="#4d5263"/><rect x="5.700" y="15.3" width="1.400" height="1.400" fill="#4d5263"/><rect x="3.100" y="17.8" width="1.400" height="1.400" fill="#9ea4b4"/><rect x="0.500" y="20.3" width="1.400" height="1.400" fill="#4d5263"/><rect x="5.700" y="20.3" width="1.400" height="1.400" fill="#4d5263"/><rect x="3.100" y="22.8" width="1.400" height="1.400" fill="#9ea4b4"/><rect x="0.500" y="25.3" width="1.400" height="1.400" fill="#4d5263"/><rect x="5.700" y="25.3" width="1.400" height="1.400" fill="#4d5263"/></svg>
<svg style="left:16.4px;top:94.6px" width="19.2" height="19.2" viewBox="0 0 16 16"><path d="M4 4.500 H12 V12 H4z" fill="#e4e6ec" stroke="#92949c" stroke-width="1.4"/><path d="M6.500 6 V10.500 M8 6 V10.500 M9.500 6 V10.500" stroke="#92949c" stroke-width="0.900"/><path d="M1.500 4 L3.500 1.500 M3.500 1.500 L2 1.800 M12.500 1.500 L14.500 4 M14.500 4 L14.300 2.500 M14.500 12.500 L12.500 15 M1.500 12.500 L3.500 15" stroke="#b8bbc4" stroke-width="1.100" fill="none"/></svg>
<svg style="left:44.4px;top:94.6px" width="19.2" height="19.2" viewBox="0 0 16 16"><path d="M2 5.500 H7 L6 3.500 Q4.500 1 3 3.500z" fill="#e4e6ec" stroke="#92949c" stroke-width="1"/><path d="M8 2 Q12 1.500 12 6" fill="none" stroke="#b8bbc4" stroke-width="1.100"/><path d="M9.500 6 H14.500 L12 8.500z" fill="#b8bbc4"/><path d="M4 9 H15 V14 H4z" fill="#e4e6ec" stroke="#92949c" stroke-width="1.3"/><path d="M6 10.500 V12.500 M8 10.500 V12.500 M10.500 10.500 V12.500 M13 10.500 V12.500" stroke="#92949c" stroke-width="1.100"/></svg>
<svg style="left:81.0px;top:94.6px" width="19.2" height="19.2" viewBox="0 0 16 16"><circle cx="8" cy="8" r="6.600" fill="#eceef2" stroke="#92949c" stroke-width="1.100"/><circle cx="8" cy="8" r="5.300" fill="none" stroke="#f6f7f9" stroke-width="1"/><path d="M6 4.500 V11.500 L11.500 8z" fill="#b8bbc4"/></svg>
<svg style="left:108.4px;top:94.6px" width="19.2" height="19.2" viewBox="0 0 16 16"><circle cx="8" cy="8" r="6.600" fill="#eceef2" stroke="#92949c" stroke-width="1.100"/><circle cx="8" cy="8" r="5.300" fill="none" stroke="#f6f7f9" stroke-width="1"/><rect x="5.500" y="5.500" width="5" height="5" fill="#b8bbc4"/></svg>
<svg style="left:136.0px;top:94.6px" width="19.2" height="19.2" viewBox="0 0 16 16"><circle cx="8" cy="8" r="6.600" fill="#eceef2" stroke="#92949c" stroke-width="1.100"/><circle cx="8" cy="8" r="5.300" fill="none" stroke="#f6f7f9" stroke-width="1"/><path d="M5 5 L11 11 M11 5 L5 11" stroke="#b8bbc4" stroke-width="1.300"/></svg>
<svg style="left:173.4px;top:94.6px" width="19.2" height="19.2" viewBox="0 0 16 16"><path d="M1.500 6.500 H14.500 V14.500 H1.500z" fill="#e4e6ec" stroke="#92949c" stroke-width="1.4"/><path d="M4 1.500 H12 V10 H8 L6.500 11.500 V10 H4z" fill="#f2f3f6" stroke="#92949c" stroke-width="1.2"/><text x="8" y="8.8" font-family="Liberation Sans, sans-serif" font-size="8.5" fill="#92949c" text-anchor="middle" font-weight="bold" font-family="Liberation Serif, serif">i</text><path d="M9 13 H13" stroke="#92949c" stroke-width="1.400" stroke-dasharray="1 1"/></svg>
<svg style="left:200.4px;top:94.6px" width="19.2" height="19.2" viewBox="0 0 16 16"><path d="M1.500 1.500 H13.500 V9.500 H1.500z" fill="#e4e6ec" stroke="#92949c" stroke-width="1.4"/><path d="M4 3 V8 M6 3 V8" stroke="#92949c" stroke-width="1.100"/><path d="M8.500 3.500 H11.500" stroke="#92949c" stroke-width="1.200" stroke-dasharray="1 1"/><circle cx="11.500" cy="11" r="3.800" fill="#f2f3f6" stroke="#b8bbc4" stroke-width="1"/><path d="M11.500 11.500 L13 9 M11.500 11.500 V13.500" stroke="#92949c" stroke-width="1.100"/></svg>
<svg style="left:239.1px;top:94.6px" width="19.2" height="19.2" viewBox="0 0 16 16"><path d="M5.500 5 H9.500 L12 7.500 V11.500 L9.500 14 H5.500 L3 11.500 V7.500z" fill="#eceef2" stroke="#92949c" stroke-width="1.200"/><path d="M6.500 6.500 V12.500 L10.500 9.500z" fill="#b8bbc4"/><path d="M9 7.500 L13.500 2.500" stroke="#92949c" stroke-width="2.800" stroke-linecap="round"/><path d="M9 7.500 L13.500 2.500" stroke="#f2f3f6" stroke-width="1.300" stroke-linecap="round"/></svg>
<svg style="left:266.4px;top:94.6px" width="19.2" height="19.2" viewBox="0 0 16 16"><path d="M3.500 1.500 H7.500 L10 4 V8 L7.500 10 H3.500 L1.500 8 V4z" fill="#eceef2" stroke="#92949c" stroke-width="1.100"/><path d="M4.500 3 V8 L8 5.500z" fill="#b8bbc4"/><path d="M10.500 2.500 Q13 2.500 13 5.500" fill="none" stroke="#b8bbc4" stroke-width="1"/><path d="M11.500 5.500 H14.500 L13 7.500z" fill="#b8bbc4"/><path d="M4.500 9.500 H15 V14.500 H4.500z" fill="#e4e6ec" stroke="#92949c" stroke-width="1.3"/><path d="M6.500 11 V13 M8.500 11 V13 M11 11 V13 M13 11 V13" stroke="#92949c" stroke-width="1.100"/></svg>
<svg style="left:294.1px;top:94.6px" width="19.2" height="19.2" viewBox="0 0 16 16"><path d="M3.500 6 H7.500 L10 8.500 V12 L7.500 14.500 H3.500 L1 12 V8.500z" fill="#eceef2" stroke="#92949c" stroke-width="1.200"/><path d="M4.500 7.500 V13 L8 10z" fill="#b8bbc4"/><path d="M6 2 L15 11 M14.500 1.500 L7.500 9" stroke="#b8bbc4" stroke-width="1.100"/></svg>
<svg style="left:331.0px;top:94.6px" width="19.2" height="19.2" viewBox="0 0 16 16"><path d="M2 1.500 H12 V14.500 H2z" fill="#e4e6ec" stroke="#92949c" stroke-width="1.3"/><path d="M4 4 L7 8 L4 12 M4 8 H6" stroke="#b8bbc4" stroke-width="0.900" fill="none"/><path d="M7 8 L10 5.500 V7 H14 V9 H10 V10.500z" fill="#b8bbc4"/></svg>
<svg style="left:359.1px;top:94.6px" width="19.2" height="19.2" viewBox="0 0 16 16"><path d="M1.500 2 H14 V13 H1.500z" fill="#e4e6ec" stroke="#92949c" stroke-width="1.2"/><path d="M1.500 4 H14" stroke="#92949c" stroke-width="1.300"/><path d="M3 6 H6.500 V8.500 H3z M9 6 H12.500 V8.500 H9z M3 10.500 H5" stroke="#92949c" stroke-width="1" fill="none"/><path d="M6 14.500 L8 11 L10.500 13 L13 11 L15.500 14.500z" fill="#f2f3f6" stroke="#92949c" stroke-width="1.1"/></svg>
<svg style="left:387.3px;top:94.6px" width="19.2" height="19.2" viewBox="0 0 16 16"><path d="M1.500 7 H15 V14.500 H1.500z" fill="#e4e6ec" stroke="#92949c" stroke-width="1.3"/><path d="M4 1.500 H12.500 V11.500 H4z" fill="#f2f3f6" stroke="#92949c" stroke-width="1.2"/><path d="M7 4 L10 6 L7 8" fill="none" stroke="#92949c" stroke-width="0.900"/><path d="M6 5 Q5.500 7.500 8.500 8.500" fill="none" stroke="#92949c" stroke-width="0.800"/><path d="M9 13 V11 M11 13 V10.500 M13 13 V9.500" stroke="#92949c" stroke-width="1.100"/></svg>
<div style="position:absolute;left:72.5px;top:92px;width:1px;height:24px;background:#b9bfce;"></div>
<div style="position:absolute;left:73.5px;top:92px;width:1px;height:24px;background:#e3e7f0;"></div>
<div style="position:absolute;left:165.1px;top:92px;width:1px;height:24px;background:#b9bfce;"></div>
<div style="position:absolute;left:166.1px;top:92px;width:1px;height:24px;background:#e3e7f0;"></div>
<div style="position:absolute;left:230.1px;top:92px;width:1px;height:24px;background:#b9bfce;"></div>
<div style="position:absolute;left:231.1px;top:92px;width:1px;height:24px;background:#e3e7f0;"></div>
<div style="position:absolute;left:322.5px;top:92px;width:1px;height:24px;background:#b9bfce;"></div>
<div style="position:absolute;left:323.5px;top:92px;width:1px;height:24px;background:#e3e7f0;"></div>
<div style="position:absolute;left:413px;top:90px;width:342px;height:28.5px;background:#cfd6e6;box-shadow:0 0 0 1px #dbe0ec;"></div>
<svg style="left:416px;top:91px" width="8" height="27" viewBox="0 0 8 27"><rect x="0.500" y="0.3" width="1.400" height="1.400" fill="#4d5263"/><rect x="5.700" y="0.3" width="1.400" height="1.400" fill="#4d5263"/><rect x="3.100" y="2.8" width="1.400" height="1.400" fill="#9ea4b4"/><rect x="0.500" y="5.3" width="1.400" height="1.400" fill="#4d5263"/><rect x="5.700" y="5.3" width="1.400" height="1.400" fill="#4d5263"/><rect x="3.100" y="7.8" width="1.400" height="1.400" fill="#9ea4b4"/><rect x="0.500" y="10.3" width="1.400" height="1.400" fill="#4d5263"/><rect x="5.700" y="10.3" width="1.400" height="1.400" fill="#4d5263"/><rect x="3.100" y="12.8" width="1.400" height="1.400" fill="#9ea4b4"/><rect x="0.500" y="15.3" width="1.400" height="1.400" fill="#4d5263"/><rect x="5.700" y="15.3" width="1.400" height="1.400" fill="#4d5263"/><rect x="3.100" y="17.8" width="1.400" height="1.400" fill="#9ea4b4"/><rect x="0.500" y="20.3" width="1.400" height="1.400" fill="#4d5263"/><rect x="5.700" y="20.3" width="1.400" height="1.400" fill="#4d5263"/><rect x="3.100" y="22.8" width="1.400" height="1.400" fill="#9ea4b4"/><rect x="0.500" y="25.3" width="1.400" height="1.400" fill="#4d5263"/><rect x="5.700" y="25.3" width="1.400" height="1.400" fill="#4d5263"/></svg>
<svg style="left:429.1px;top:94.6px" width="19.2" height="19.2" viewBox="0 0 16 16"><path d="M4 1.500 H12 V9 H4z" fill="#f0f1f5" stroke="#92949c" stroke-width="1.3"/><path d="M6.500 3.500 V7 M8 3.500 V7 M9.500 3.500 V7" stroke="#b8bbc4" stroke-width="0.800"/><path d="M2.500 9.500 H13.500 L14.500 13 H1.500z" fill="#e4e6ec" stroke="#92949c" stroke-width="1.2"/><path d="M2 13.500 H14" stroke="#92949c" stroke-width="1.100"/></svg>
<svg style="left:456.4px;top:94.6px" width="19.2" height="19.2" viewBox="0 0 16 16"><path d="M4 1.500 H12 V9 H4z" fill="#f0f1f5" stroke="#92949c" stroke-width="1.3"/><path d="M7 3.500 V7.500 L10 5.500z" fill="#b8bbc4"/><path d="M2.500 9.500 H13.500 L14.500 13 H1.500z" fill="#e4e6ec" stroke="#92949c" stroke-width="1.2"/><path d="M2 13.500 H14" stroke="#92949c" stroke-width="1.100"/></svg>
<svg style="left:484.8px;top:94.6px" width="19.2" height="19.2" viewBox="0 0 16 16"><path d="M3 9 V2 H11 V7 L14 9.500 V13 H1.500 V9z" fill="#f8a8d8" stroke="#111" stroke-width="1.300"/><rect x="4.500" y="3.500" width="5" height="4.500" fill="#fbd0ec"/><text x="7" y="8" font-family="Liberation Sans, sans-serif" font-size="6.5" fill="#c010c0" text-anchor="middle" font-weight="bold">H</text><path d="M3 9 H11" stroke="#111" stroke-width="1"/><rect x="2" y="10.500" width="2" height="2" fill="#f060b0"/><circle cx="6" cy="13" r="2" fill="#60e0f0" stroke="#111" stroke-width="0.900"/><circle cx="12" cy="13" r="2" fill="#60e0f0" stroke="#111" stroke-width="0.900"/><circle cx="9" cy="12.500" r="0.800" fill="#e040a0"/></svg>
<svg style="left:511.0px;top:94.6px" width="19.2" height="19.2" viewBox="0 0 16 16"><path d="M1.500 4 L3.500 1.500 H11.500 V11 L9.500 13.500 H1.500z" fill="#e4e6ec" stroke="#92949c" stroke-width="1.2"/><path d="M1.500 4 H9.500 V13.500 M9.500 4 L11.500 1.500" fill="none" stroke="#92949c" stroke-width="1"/><path d="M7 8 H12 V6 L15.500 9.500 L12 13 V11 H7z" fill="#b8bbc4"/></svg>
<svg style="left:539.1px;top:94.6px" width="19.2" height="19.2" viewBox="0 0 16 16"><path d="M1.500 3.500 L3.500 1.500 H14.500 V12.500 L12.500 14.500 H1.500z" fill="#e4e6ec" stroke="#92949c" stroke-width="1.2"/><path d="M1.500 3.500 H12.500 V14.500 M12.500 3.500 L14.500 1.500 M7 3.500 V14.500" fill="none" stroke="#92949c" stroke-width="1.100"/><path d="M3 8 H5 V12 H3z" fill="none" stroke="#92949c" stroke-width="0.900"/><path d="M9 6 H11 M9 8 H11 M9 10 H11" stroke="#b8bbc4" stroke-width="0.800"/></svg>
<svg style="left:566.0px;top:94.6px" width="19.2" height="19.2" viewBox="0 0 16 16"><path d="M1.500 2 H14.500 V13.500 H1.500z" fill="#f0f1f5" stroke="#92949c" stroke-width="1.3"/><rect x="4" y="5.500" width="8" height="4.500" fill="#b8bbc4" stroke="#92949c" stroke-width="1"/><path d="M6 4 V5.500 M10 4 V5.500 M6 10 V11.500 M10 10 V11.500" stroke="#92949c" stroke-width="1.400"/></svg>
<svg style="left:594.4px;top:94.6px" width="19.2" height="19.2" viewBox="0 0 16 16"><path d="M3.500 3.500 L5.500 1.500 H11.500 V12 L9.500 14 H3.500z" fill="#e4e6ec" stroke="#92949c" stroke-width="1.2"/><path d="M3.500 3.500 H9.500 V14 M9.500 3.500 L11.500 1.500" fill="none" stroke="#92949c" stroke-width="1"/><rect x="5" y="8.500" width="3" height="4" fill="none" stroke="#92949c" stroke-width="0.900"/><path d="M0.500 13.500 L3 14.500 M11 14.500 L15 12.500" stroke="#b8bbc4" stroke-width="0.800"/></svg>
<svg style="left:621.4px;top:94.6px" width="19.2" height="19.2" viewBox="0 0 16 16"><rect x="2" y="1.500" width="12.500" height="12.500" fill="#f3f4f7"/><path d="M4 2 V14 M6.500 2 V14 M9 2 V14 M11.500 2 V14" stroke="#92949c" stroke-width="1"/><path d="M3 10 H5 M5.500 8 H7.500 M8 6 H10 M10.500 9.500 H12.500" stroke="#b8bbc4" stroke-width="1.800"/><path d="M1.500 2 V14 M2 14.500 H14.500" stroke="#b8bbc4" stroke-width="0.800" stroke-dasharray="0.800 0.800"/></svg>
<svg style="left:649.8px;top:94.6px" width="19.2" height="19.2" viewBox="0 0 16 16"><path d="M1.500 2 H14 V14 H1.500z" fill="#f0f1f5" stroke="#92949c" stroke-width="1.1"/><path d="M5 3 V13 M10.500 3 V13" stroke="#92949c" stroke-width="1.100"/><rect x="3.500" y="6" width="3" height="6" fill="#b8bbc4"/><rect x="9" y="4.500" width="3" height="7" fill="#b8bbc4"/></svg>
<svg style="left:677.4px;top:94.6px" width="19.2" height="19.2" viewBox="0 0 16 16"><rect x="2" y="2" width="6" height="6" fill="#b4b6bc"/><rect x="8" y="2" width="6" height="6" fill="#eeeff2"/><rect x="2" y="8" width="12" height="6" fill="#c9cbd1"/></svg>
<svg style="left:704.1px;top:94.6px" width="19.2" height="19.2" viewBox="0 0 16 16"><path d="M1.500 3.500 H13 V14.500 H1.500z" fill="#eceef2" stroke="#92949c" stroke-width="1.3"/><path d="M3 7 L4.500 8.500 L7 5.500" fill="none" stroke="#b8bbc4" stroke-width="1.300"/><path d="M3 11 H11.500 M3 12.800 H11.500" stroke="#b8bbc4" stroke-width="0.900"/><path d="M8.500 7.500 L13.500 2.500" stroke="#92949c" stroke-width="2.600" stroke-linecap="round"/><path d="M8.800 7.200 L13.500 2.500" stroke="#f2f3f6" stroke-width="1.200" stroke-linecap="round"/></svg>
<div style="position:absolute;left:758px;top:90px;width:242px;height:28.5px;background:#cfd6e6;box-shadow:0 0 0 1px #dbe0ec;"></div>
<svg style="left:761px;top:91px" width="8" height="27" viewBox="0 0 8 27"><rect x="0.500" y="0.3" width="1.400" height="1.400" fill="#4d5263"/><rect x="5.700" y="0.3" width="1.400" height="1.400" fill="#4d5263"/><rect x="3.100" y="2.8" width="1.400" height="1.400" fill="#9ea4b4"/><rect x="0.500" y="5.3" width="1.400" height="1.400" fill="#4d5263"/><rect x="5.700" y="5.3" width="1.400" height="1.400" fill="#4d5263"/><rect x="3.100" y="7.8" width="1.400" height="1.400" fill="#9ea4b4"/><rect x="0.500" y="10.3" width="1.400" height="1.400" fill="#4d5263"/><rect x="5.700" y="10.3" width="1.400" height="1.400" fill="#4d5263"/><rect x="3.100" y="12.8" width="1.400" height="1.400" fill="#9ea4b4"/><rect x="0.500" y="15.3" width="1.400" height="1.400" fill="#4d5263"/><rect x="5.700" y="15.3" width="1.400" height="1.400" fill="#4d5263"/><rect x="3.100" y="17.8" width="1.400" height="1.400" fill="#9ea4b4"/><rect x="0.500" y="20.3" width="1.400" height="1.400" fill="#4d5263"/><rect x="5.700" y="20.3" width="1.400" height="1.400" fill="#4d5263"/><rect x="3.100" y="22.8" width="1.400" height="1.400" fill="#9ea4b4"/><rect x="0.500" y="25.3" width="1.400" height="1.400" fill="#4d5263"/><rect x="5.700" y="25.3" width="1.400" height="1.400" fill="#4d5263"/></svg>
<svg style="left:733.4px;top:92.6px" width="19.2" height="19.2" viewBox="0 0 16 16"><path d="M2 3 H9 V8 H2z" fill="#e1e4ec" stroke="#c6cad6" stroke-width="0.900"/></svg>
<svg style="left:776.4px;top:92.6px" width="19.2" height="19.2" viewBox="0 0 16 16"><path d="M3 5 H6 M3 5 V12 H6 M13 5 H10 M13 5 V12 H10" fill="none" stroke="#c6cad6" stroke-width="0.900"/></svg>
<svg style="left:801.4px;top:92.6px" width="19.2" height="19.2" viewBox="0 0 16 16"><path d="M3 5 H6 M3 5 V12 H6 M13 5 H10 M13 5 V12 H10" fill="none" stroke="#c6cad6" stroke-width="0.900"/></svg>
<svg style="left:826.4px;top:92.6px" width="19.2" height="19.2" viewBox="0 0 16 16"><path d="M3 5 H6 M3 5 V12 H6 M13 5 H10 M13 5 V12 H10" fill="none" stroke="#c6cad6" stroke-width="0.900"/></svg>
<svg style="left:869.4px;top:92.6px" width="19.2" height="19.2" viewBox="0 0 16 16"><path d="M3 5 H6 M3 5 V12 H6 M13 5 H10 M13 5 V12 H10" fill="none" stroke="#c6cad6" stroke-width="0.900"/></svg>
<svg style="left:898.4px;top:92.6px" width="19.2" height="19.2" viewBox="0 0 16 16"><path d="M3 5 H6 M3 5 V12 H6 M13 5 H10 M13 5 V12 H10" fill="none" stroke="#c6cad6" stroke-width="0.900"/></svg>
<svg style="left:952.4px;top:92.6px" width="19.2" height="19.2" viewBox="0 0 16 16"><path d="M3 2.500 H11 Q12.500 2.500 12.500 4 V14 H3z" fill="#eceef3" stroke="#c6cad6" stroke-width="1.200"/><path d="M5 5.500 H10.500 M5 8 H10.500" stroke="#c6cad6" stroke-width="0.900"/></svg>
<svg style="left:974.4px;top:92.6px" width="19.2" height="19.2" viewBox="0 0 16 16"><path d="M3 2.500 H11 Q12.500 2.500 12.500 4 V14 H3z" fill="#eceef3" stroke="#c6cad6" stroke-width="1.200"/><path d="M5 5.500 H10.500 M5 8 H10.500" stroke="#c6cad6" stroke-width="0.900"/></svg>
<div class="t" style="left:729.85px;top:97.3px;font-size:16.2px;color:#000;transform-origin:0 0;transform:scaleX(1.3129);font-weight:bold;-webkit-text-stroke:0.9px #000;">InstrumentationTools.com</div>
<div style="position:absolute;left:1003px;top:90px;width:232.5999999999999px;height:28.5px;background:#cfd6e6;box-shadow:0 0 0 1px #dbe0ec;"></div>
<svg style="left:1006px;top:91px" width="8" height="27" viewBox="0 0 8 27"><rect x="0.500" y="0.3" width="1.400" height="1.400" fill="#4d5263"/><rect x="5.700" y="0.3" width="1.400" height="1.400" fill="#4d5263"/><rect x="3.100" y="2.8" width="1.400" height="1.400" fill="#9ea4b4"/><rect x="0.500" y="5.3" width="1.400" height="1.400" fill="#4d5263"/><rect x="5.700" y="5.3" width="1.400" height="1.400" fill="#4d5263"/><rect x="3.100" y="7.8" width="1.400" height="1.400" fill="#9ea4b4"/><rect x="0.500" y="10.3" width="1.400" height="1.400" fill="#4d5263"/><rect x="5.700" y="10.3" width="1.400" height="1.400" fill="#4d5263"/><rect x="3.100" y="12.8" width="1.400" height="1.400" fill="#9ea4b4"/><rect x="0.500" y="15.3" width="1.400" height="1.400" fill="#4d5263"/><rect x="5.700" y="15.3" width="1.400" height="1.400" fill="#4d5263"/><rect x="3.100" y="17.8" width="1.400" height="1.400" fill="#9ea4b4"/><rect x="0.500" y="20.3" width="1.400" height="1.400" fill="#4d5263"/><rect x="5.700" y="20.3" width="1.400" height="1.400" fill="#4d5263"/><rect x="3.100" y="22.8" width="1.400" height="1.400" fill="#9ea4b4"/><rect x="0.500" y="25.3" width="1.400" height="1.400" fill="#4d5263"/><rect x="5.700" y="25.3" width="1.400" height="1.400" fill="#4d5263"/></svg>
<div style="position:absolute;left:1015px;top:91.5px;width:27.5px;height:26.0px;background:#fdf1c6;border:1.500px solid #e8c66c;box-sizing:border-box;"></div>
<svg style="left:1016.7px;top:95.0px" width="24" height="12" viewBox="0 0 24 12"><path d="M8.500 1 h6.500 l-2.300 2.300 5.300 5.600 -1.800 1.700 -5.300 -5.600 -2.400 2.300z" fill="#fff" stroke="#111" stroke-width="1.200"/><path d="M12.500 4.500 l4.800 5" stroke="#111" stroke-width="0.800" stroke-dasharray="1 1"/></svg>
<div class="c" style="left:1013.9px;width:30px;top:105.8px;font-size:12.100px;color:#14161c;letter-spacing:-0.1px;-webkit-text-stroke:0.25px #14161c;">Esc</div>
<svg style="left:1042.4px;top:93.3px" width="26.400" height="13.200" viewBox="0 0 24 12"><path d="M7 1.500 H17 V5 H7z M12 5 V9.500 M8 7.500 H16 M9.500 9.500 H14.500" fill="none" stroke="#8d8e95" stroke-width="1.1" stroke-linejoin="bevel" /></svg>
<div class="c" style="left:1040.8px;width:30px;top:105.8px;font-size:12.100px;color:#8d93a6;letter-spacing:-0.1px;-webkit-text-stroke:0.25px #8d93a6;">F3</div>
<svg style="left:1069.8px;top:93.3px" width="26.400" height="13.200" viewBox="0 0 24 12"><path d="M4 1.500 H20 V9.500 H4z M12 1.500 V9.500 M2 5.500 H4" fill="none" stroke="#8d8e95" stroke-width="1.1" stroke-linejoin="bevel" /><text x="8" y="8.5" font-family="Liberation Sans, sans-serif" font-size="7.5" fill="#8d8e95" text-anchor="middle" >N</text></svg>
<div class="c" style="left:1068.2px;width:30px;top:105.8px;font-size:12.100px;color:#8d93a6;letter-spacing:-0.1px;-webkit-text-stroke:0.25px #8d93a6;">F4</div>
<svg style="left:1097.4px;top:93.3px" width="26.400" height="13.200" viewBox="0 0 24 12"><path d="M7 1.500 H17 V5.500 H7z M10.500 1.500 V5.500 M13.500 1.500 V5.500 M12 5.500 V10 M8 8 H16 M10 10 H14" fill="none" stroke="#8d8e95" stroke-width="1.1" stroke-linejoin="bevel" /></svg>
<div class="c" style="left:1095.8px;width:30px;top:105.8px;font-size:12.100px;color:#8d93a6;letter-spacing:-0.1px;-webkit-text-stroke:0.25px #8d93a6;">F5</div>
<svg style="left:1124.8px;top:93.3px" width="26.400" height="13.200" viewBox="0 0 24 12"><path d="M6 10 V5 H15" fill="none" stroke="#8d8e95" stroke-width="1.2" stroke-linejoin="bevel" /><path d="M18.500 2 V8 L13.500 5z" fill="#8d8e95"/></svg>
<div class="c" style="left:1123.2px;width:30px;top:105.8px;font-size:12.100px;color:#8d93a6;letter-spacing:-0.1px;-webkit-text-stroke:0.25px #8d93a6;">F6</div>
<svg style="left:1152.4px;top:93.3px" width="26.400" height="13.200" viewBox="0 0 24 12"><path d="M6 1.500 V7 H15" fill="none" stroke="#8d8e95" stroke-width="1.2" stroke-linejoin="bevel" /><path d="M14 4 V10 L19 7z" fill="#8d8e95"/></svg>
<div class="c" style="left:1150.8px;width:30px;top:105.8px;font-size:12.100px;color:#8d93a6;letter-spacing:-0.1px;-webkit-text-stroke:0.25px #8d93a6;">F7</div>
<svg style="left:1179.8px;top:93.3px" width="26.400" height="13.200" viewBox="0 0 24 12"><path d="M2 3.500 H9 V7.500 H2z M6 1.500 H17 M6 9.500 H17" fill="none" stroke="#c3c8d6" stroke-width="1.1" stroke-linejoin="bevel" /><path d="M13 3.500 H20 V7.500 H13z M16.500 1 V3.500 M16.500 7.500 V10.500 M9 5.500 H13" fill="none" stroke="#8d8e95" stroke-width="1.2" stroke-linejoin="bevel" /></svg>
<div class="c" style="left:1178.2px;width:30px;top:105.8px;font-size:12.100px;color:#8d93a6;letter-spacing:-0.1px;-webkit-text-stroke:0.25px #8d93a6;">F8</div>
<svg style="left:1207.4px;top:93.3px" width="26.400" height="13.200" viewBox="0 0 24 12"><path d="M14 3.500 H21 V7.500 H14z M7 1.500 H18 M7 9.500 H18" fill="none" stroke="#c3c8d6" stroke-width="1.1" stroke-linejoin="bevel" /><path d="M3 3.500 H10 V7.500 H3z M6.500 1 V3.500 M6.500 7.500 V10.500 M10 5.500 H14" fill="none" stroke="#8d8e95" stroke-width="1.2" stroke-linejoin="bevel" /></svg>
<div class="c" style="left:1205.8px;width:30px;top:105.8px;font-size:12.100px;color:#8d93a6;letter-spacing:-0.1px;-webkit-text-stroke:0.25px #8d93a6;">F9</div>
<div style="position:absolute;left:2px;top:121.5px;width:643px;height:28.0px;background:#cfd6e6;box-shadow:0 0 0 1px #dbe0ec;"></div>
<svg style="left:3px;top:122.5px" width="8" height="27" viewBox="0 0 8 27"><rect x="0.500" y="0.3" width="1.400" height="1.400" fill="#4d5263"/><rect x="5.700" y="0.3" width="1.400" height="1.400" fill="#4d5263"/><rect x="3.100" y="2.8" width="1.400" height="1.400" fill="#9ea4b4"/><rect x="0.500" y="5.3" width="1.400" height="1.400" fill="#4d5263"/><rect x="5.700" y="5.3" width="1.400" height="1.400" fill="#4d5263"/><rect x="3.100" y="7.8" width="1.400" height="1.400" fill="#9ea4b4"/><rect x="0.500" y="10.3" width="1.400" height="1.400" fill="#4d5263"/><rect x="5.700" y="10.3" width="1.400" height="1.400" fill="#4d5263"/><rect x="3.100" y="12.8" width="1.400" height="1.400" fill="#9ea4b4"/><rect x="0.500" y="15.3" width="1.400" height="1.400" fill="#4d5263"/><rect x="5.700" y="15.3" width="1.400" height="1.400" fill="#4d5263"/><rect x="3.100" y="17.8" width="1.400" height="1.400" fill="#9ea4b4"/><rect x="0.500" y="20.3" width="1.400" height="1.400" fill="#4d5263"/><rect x="5.700" y="20.3" width="1.400" height="1.400" fill="#4d5263"/><rect x="3.100" y="22.8" width="1.400" height="1.400" fill="#9ea4b4"/><rect x="0.500" y="25.3" width="1.400" height="1.400" fill="#4d5263"/><rect x="5.700" y="25.3" width="1.400" height="1.400" fill="#4d5263"/></svg>
<div style="position:absolute;left:12.5px;top:122.5px;width:27.5px;height:26.0px;background:#fdf1c6;border:1.500px solid #e8c66c;box-sizing:border-box;"></div>
<svg style="left:14.0px;top:126.0px" width="24" height="12" viewBox="0 0 24 12"><path d="M8.500 1 h6.500 l-2.300 2.300 5.300 5.600 -1.800 1.700 -5.300 -5.600 -2.400 2.300z" fill="#fff" stroke="#111" stroke-width="1.200"/><path d="M12.500 4.500 l4.800 5" stroke="#111" stroke-width="0.800" stroke-dasharray="1 1"/></svg>
<div class="c" style="left:10.2px;width:30px;top:136.8px;font-size:12.100px;color:#14161c;letter-spacing:-0.1px;-webkit-text-stroke:0.25px #14161c;">Esc</div>
<svg style="left:41.6px;top:126.0px" width="24" height="12" viewBox="0 0 24 12"><path d="M2 5.7 H6.500 M6.500 1.500 V10.300 M17.500 1.500 V10.300 M17.500 5.7 H22" fill="none" stroke="#14161c" stroke-width="1.5" stroke-linejoin="bevel" /></svg>
<div class="c" style="left:37.8px;width:30px;top:136.8px;font-size:12.100px;color:#14161c;letter-spacing:-0.1px;-webkit-text-stroke:0.25px #14161c;">F3</div>
<svg style="left:69.2px;top:126.0px" width="24" height="12" viewBox="0 0 24 12"><path d="M2 5.7 H6.500 M6.500 1.500 V10.300 M17.500 1.500 V10.300 M17.500 5.7 H22 M8.500 9.800 L15.500 1.800" fill="none" stroke="#14161c" stroke-width="1.5" stroke-linejoin="bevel" /></svg>
<div class="c" style="left:65.4px;width:30px;top:136.8px;font-size:12.100px;color:#14161c;letter-spacing:-0.1px;-webkit-text-stroke:0.25px #14161c;">F4</div>
<svg style="left:96.8px;top:126.0px" width="24" height="12" viewBox="0 0 24 12"><path d="M2 5.7 H7 M7 1.500 V10.300 M18 1.500 V10.300 M18 5.7 H22 M10 10.300 V2 H13 Q15 2 15 4 Q15 6 13 6 H10" fill="none" stroke="#14161c" stroke-width="1.5" stroke-linejoin="bevel" /></svg>
<div class="c" style="left:93.0px;width:30px;top:136.8px;font-size:12.100px;color:#14161c;letter-spacing:-0.1px;-webkit-text-stroke:0.25px #14161c;">sF1</div>
<svg style="left:124.4px;top:126.0px" width="24" height="12" viewBox="0 0 24 12"><path d="M2 5.7 H7 M7 1.500 V10.300 M18 1.500 V10.300 M18 5.7 H22 M9.500 10.300 V1.800 L15.500 10 V1.500" fill="none" stroke="#14161c" stroke-width="1.5" stroke-linejoin="bevel" /></svg>
<div class="c" style="left:120.6px;width:30px;top:136.8px;font-size:12.100px;color:#14161c;letter-spacing:-0.1px;-webkit-text-stroke:0.25px #14161c;">sF2</div>
<svg style="left:152.0px;top:126.0px" width="24" height="12" viewBox="0 0 24 12"><path d="M2 9 H8 V2.500 H16 V9 H22 M5.500 7 L8 4.500 L10.500 7" fill="none" stroke="#8d8e95" stroke-width="1.2" stroke-linejoin="bevel" /></svg>
<div class="c" style="left:148.2px;width:30px;top:136.8px;font-size:12.100px;color:#8d93a6;letter-spacing:-0.1px;-webkit-text-stroke:0.25px #8d93a6;">aR</div>
<svg style="left:179.6px;top:126.0px" width="24" height="12" viewBox="0 0 24 12"><path d="M2 9 H8 V2.500 H16 V9 H22 M13.500 5.500 L16 8 L18.500 5.500" fill="none" stroke="#8d8e95" stroke-width="1.2" stroke-linejoin="bevel" /></svg>
<div class="c" style="left:175.8px;width:30px;top:136.8px;font-size:12.100px;color:#8d93a6;letter-spacing:-0.1px;-webkit-text-stroke:0.25px #8d93a6;">aF</div>
<svg style="left:207.2px;top:126.0px" width="24" height="12" viewBox="0 0 24 12"><path d="M3.500 5.7 H20.500" fill="none" stroke="#14161c" stroke-width="1.6" stroke-linejoin="bevel" /></svg>
<div class="c" style="left:203.4px;width:30px;top:136.8px;font-size:12.100px;color:#14161c;letter-spacing:-0.1px;-webkit-text-stroke:0.25px #14161c;">F5</div>
<svg style="left:234.8px;top:126.0px" width="24" height="12" viewBox="0 0 24 12"><path d="M12 1.200 V10.300" fill="none" stroke="#14161c" stroke-width="1.6" stroke-linejoin="bevel" /></svg>
<div class="c" style="left:231.0px;width:30px;top:136.8px;font-size:12.100px;color:#14161c;letter-spacing:-0.1px;-webkit-text-stroke:0.25px #14161c;">F6</div>
<svg style="left:262.4px;top:126.0px" width="24" height="12" viewBox="0 0 24 12"><path d="M3 5.7 H20 M13 2 L17 5.7 L13 9.500 M16 2 L20 5.7 L16 9.500" fill="none" stroke="#14161c" stroke-width="1.3" stroke-linejoin="bevel" /></svg>
<div class="c" style="left:258.6px;width:30px;top:136.8px;font-size:12.100px;color:#14161c;letter-spacing:-0.1px;-webkit-text-stroke:0.25px #14161c;">sF8</div>
<svg style="left:290.0px;top:126.0px" width="24" height="12" viewBox="0 0 24 12"><path d="M5 5.7 H19 M12 1.500 V10 M8 2 L16 9.500 M16 2 L8 9.500" fill="none" stroke="#14161c" stroke-width="1.2" stroke-linejoin="bevel" /></svg>
<div class="c" style="left:286.2px;width:30px;top:136.8px;font-size:12.100px;color:#14161c;letter-spacing:-0.1px;-webkit-text-stroke:0.25px #14161c;">sF9</div>
<svg style="left:317.6px;top:126.0px" width="24" height="12" viewBox="0 0 24 12"><path d="M2 5.7 H6 M18 5.7 H22 M9 1.500 Q5.500 5.7 9 10 M15 1.500 Q18.500 5.7 15 10" fill="none" stroke="#14161c" stroke-width="1.4" stroke-linejoin="bevel" /></svg>
<div class="c" style="left:313.8px;width:30px;top:136.8px;font-size:12.100px;color:#14161c;letter-spacing:-0.1px;-webkit-text-stroke:0.25px #14161c;">F9</div>
<svg style="left:345.2px;top:126.0px" width="24" height="12" viewBox="0 0 24 12"><path d="M2 5.7 H6 M18 5.7 H22 M9 1.500 Q5.500 5.7 9 10 M15 1.500 Q18.500 5.7 15 10" fill="none" stroke="#14161c" stroke-width="1.4" stroke-linejoin="bevel" /><path d="M9.500 9.500 L14.500 2" fill="none" stroke="#14161c" stroke-width="1.4" stroke-linejoin="bevel" /></svg>
<div class="c" style="left:341.4px;width:30px;top:136.8px;font-size:12.100px;color:#14161c;letter-spacing:-0.1px;-webkit-text-stroke:0.25px #14161c;">F11</div>
<svg style="left:372.8px;top:126.0px" width="24" height="12" viewBox="0 0 24 12"><path d="M2 5.7 H6 M18 5.7 H22 M9 1.500 Q5.500 5.7 9 10 M15 1.500 Q18.500 5.7 15 10" fill="none" stroke="#14161c" stroke-width="1.4" stroke-linejoin="bevel" /><text x="12" y="9.3" font-family="Liberation Sans, sans-serif" font-size="10" fill="#14161c" text-anchor="middle" font-weight="bold">S</text></svg>
<div class="c" style="left:369.0px;width:30px;top:136.8px;font-size:12.100px;color:#14161c;letter-spacing:-0.1px;-webkit-text-stroke:0.25px #14161c;">sF3</div>
<svg style="left:400.4px;top:126.0px" width="24" height="12" viewBox="0 0 24 12"><path d="M2 5.7 H6 M18 5.7 H22 M9 1.500 Q5.500 5.7 9 10 M15 1.500 Q18.500 5.7 15 10" fill="none" stroke="#14161c" stroke-width="1.4" stroke-linejoin="bevel" /><text x="12" y="9.3" font-family="Liberation Sans, sans-serif" font-size="10" fill="#14161c" text-anchor="middle" font-weight="bold">R</text></svg>
<div class="c" style="left:396.6px;width:30px;top:136.8px;font-size:12.100px;color:#14161c;letter-spacing:-0.1px;-webkit-text-stroke:0.25px #14161c;">sF4</div>
<svg style="left:428.0px;top:126.0px" width="24" height="12" viewBox="0 0 24 12"><path d="M2 5.7 H6 M18 5.7 H22 M9 1.500 Q5.500 5.7 9 10 M15 1.500 Q18.500 5.7 15 10" fill="none" stroke="#14161c" stroke-width="1.4" stroke-linejoin="bevel" /><text x="12" y="9.3" font-family="Liberation Sans, sans-serif" font-size="10" fill="#14161c" text-anchor="middle" font-weight="bold">P</text></svg>
<div class="c" style="left:424.2px;width:30px;top:136.8px;font-size:12.100px;color:#14161c;letter-spacing:-0.1px;-webkit-text-stroke:0.25px #14161c;">sF5</div>
<svg style="left:455.6px;top:126.0px" width="24" height="12" viewBox="0 0 24 12"><path d="M2 5.7 H6 M18 5.7 H22 M9 1.500 Q5.500 5.7 9 10 M15 1.500 Q18.500 5.7 15 10" fill="none" stroke="#14161c" stroke-width="1.4" stroke-linejoin="bevel" /><text x="12" y="9.3" font-family="Liberation Sans, sans-serif" font-size="10" fill="#14161c" text-anchor="middle" font-weight="bold">N</text></svg>
<div class="c" style="left:451.8px;width:30px;top:136.8px;font-size:12.100px;color:#14161c;letter-spacing:-0.1px;-webkit-text-stroke:0.25px #14161c;">sF6</div>
<svg style="left:483.2px;top:126.0px" width="24" height="12" viewBox="0 0 24 12"><path d="M2 5.7 H5.500 M18.500 5.7 H22 M9 1.500 Q7 1.500 7 3.500 Q7 5.7 5.500 5.7 Q7 5.7 7 8 Q7 10 9 10 M15 1.500 Q17 1.500 17 3.500 Q17 5.7 18.500 5.7 Q17 5.7 17 8 Q17 10 15 10" fill="none" stroke="#14161c" stroke-width="1.3" stroke-linejoin="bevel" /><text x="12" y="9.3" font-family="Liberation Sans, sans-serif" font-size="10" fill="#14161c" text-anchor="middle" font-weight="bold">F</text></svg>
<div class="c" style="left:479.4px;width:30px;top:136.8px;font-size:12.100px;color:#14161c;letter-spacing:-0.1px;-webkit-text-stroke:0.25px #14161c;">F10</div>
<svg style="left:510.8px;top:126.0px" width="24" height="12" viewBox="0 0 24 12"><path d="M2 5.7 H5 M19 5.7 H22 M5 2 H19 V9.500 H5z" fill="none" stroke="#8d8e95" stroke-width="1.3" stroke-linejoin="bevel" /></svg>
<div class="c" style="left:507.0px;width:30px;top:136.8px;font-size:12.100px;color:#8d93a6;letter-spacing:-0.1px;-webkit-text-stroke:0.25px #8d93a6;">sF7</div>
<svg style="left:538.4px;top:126.0px" width="24" height="12" viewBox="0 0 24 12"><path d="M5 1 V3.500 Q5 5 7 5 M7.500 1 V10.500 M16.500 1 V10.500 M19 1 V3.500 Q19 5 17 5" fill="none" stroke="#14161c" stroke-width="1.5" stroke-linejoin="bevel" /></svg>
<div class="c" style="left:534.6px;width:30px;top:136.8px;font-size:12.100px;color:#14161c;letter-spacing:-0.1px;-webkit-text-stroke:0.25px #14161c;">c3</div>
<svg style="left:566.0px;top:126.0px" width="24" height="12" viewBox="0 0 24 12"><path d="M5 1 V3.500 Q5 5 7 5 M7.500 1 V10.500 M16.500 1 V10.500 M19 1 V3.500 Q19 5 17 5" fill="none" stroke="#14161c" stroke-width="1.5" stroke-linejoin="bevel" /><path d="M9.500 9.500 L14.500 2" fill="none" stroke="#14161c" stroke-width="1.4" stroke-linejoin="bevel" /></svg>
<div class="c" style="left:562.2px;width:30px;top:136.8px;font-size:12.100px;color:#14161c;letter-spacing:-0.1px;-webkit-text-stroke:0.25px #14161c;">c4</div>
<svg style="left:593.6px;top:126.0px" width="24" height="12" viewBox="0 0 24 12"><path d="M3.500 1 V3.500 Q3.500 5 5.500 5 M6 1 V10.500 M18 1 V10.500 M20.500 1 V3.500 Q20.500 5 18.500 5 M9.500 10.500 V2 H12.500 Q14.500 2 14.500 4 Q14.500 6 12.500 6 H9.500" fill="none" stroke="#14161c" stroke-width="1.5" stroke-linejoin="bevel" /></svg>
<div class="c" style="left:589.8px;width:30px;top:136.8px;font-size:12.100px;color:#14161c;letter-spacing:-0.1px;-webkit-text-stroke:0.25px #14161c;">c5</div>
<svg style="left:621.2px;top:126.0px" width="24" height="12" viewBox="0 0 24 12"><path d="M3.500 1 V3.500 Q3.500 5 5.500 5 M6 1 V10.500 M18 1 V10.500 M20.500 1 V3.500 Q20.500 5 18.500 5 M9 10.500 V1.500 L15 10 V1.500" fill="none" stroke="#14161c" stroke-width="1.5" stroke-linejoin="bevel" /></svg>
<div class="c" style="left:617.4px;width:30px;top:136.8px;font-size:12.100px;color:#14161c;letter-spacing:-0.1px;-webkit-text-stroke:0.25px #14161c;">c6</div>
<div style="position:absolute;left:648px;top:121.5px;width:612.5999999999999px;height:28.0px;background:#cfd6e6;box-shadow:0 0 0 1px #dbe0ec;"></div>
<svg style="left:651px;top:122.5px" width="8" height="27" viewBox="0 0 8 27"><rect x="0.500" y="0.3" width="1.400" height="1.400" fill="#4d5263"/><rect x="5.700" y="0.3" width="1.400" height="1.400" fill="#4d5263"/><rect x="3.100" y="2.8" width="1.400" height="1.400" fill="#9ea4b4"/><rect x="0.500" y="5.3" width="1.400" height="1.400" fill="#4d5263"/><rect x="5.700" y="5.3" width="1.400" height="1.400" fill="#4d5263"/><rect x="3.100" y="7.8" width="1.400" height="1.400" fill="#9ea4b4"/><rect x="0.500" y="10.3" width="1.400" height="1.400" fill="#4d5263"/><rect x="5.700" y="10.3" width="1.400" height="1.400" fill="#4d5263"/><rect x="3.100" y="12.8" width="1.400" height="1.400" fill="#9ea4b4"/><rect x="0.500" y="15.3" width="1.400" height="1.400" fill="#4d5263"/><rect x="5.700" y="15.3" width="1.400" height="1.400" fill="#4d5263"/><rect x="3.100" y="17.8" width="1.400" height="1.400" fill="#9ea4b4"/><rect x="0.500" y="20.3" width="1.400" height="1.400" fill="#4d5263"/><rect x="5.700" y="20.3" width="1.400" height="1.400" fill="#4d5263"/><rect x="3.100" y="22.8" width="1.400" height="1.400" fill="#9ea4b4"/><rect x="0.500" y="25.3" width="1.400" height="1.400" fill="#4d5263"/><rect x="5.700" y="25.3" width="1.400" height="1.400" fill="#4d5263"/></svg>
<div style="position:absolute;left:687.5px;top:122.5px;width:27.5px;height:26.0px;background:#fdf1c6;border:1.500px solid #e8c66c;box-sizing:border-box;"></div>
<div style="position:absolute;left:715px;top:122.5px;width:27.5px;height:26.0px;background:#fdf1c6;border:1.500px solid #e8c66c;box-sizing:border-box;"></div>
<div style="position:absolute;left:982.5px;top:122.5px;width:27.5px;height:26.0px;background:#fdf1c6;border:1.500px solid #e8c66c;box-sizing:border-box;"></div>
<svg style="left:664.1px;top:125.6px" width="19.2" height="19.2" viewBox="0 0 16 16"><path d="M2.500 3.500 L4 1.500 H8 L9.500 3.500z" fill="#7a28a8" stroke="#111" stroke-width="0.900"/><rect x="1.500" y="3.500" width="13" height="11.500" fill="#fbd6f0" stroke="#111" stroke-width="1.400"/><path d="M3.500 6.200 H12.500 M3.500 8.400 H12.500 M3.500 10.600 H12.500 M3.500 12.800 H12.500" stroke="#555" stroke-width="1"/></svg>
<svg style="left:691.4px;top:125.6px" width="19.2" height="19.2" viewBox="0 0 16 16"><path d="M3.500 3.500 L5 1.500 H8.500 L10 3.500z" fill="#b8bbc4" stroke="#92949c" stroke-width="0.800"/><rect x="2" y="3.500" width="12.500" height="11.500" fill="#f1f2f5" stroke="#92949c" stroke-width="1.200"/><path d="M4 7 H5.500 M6 5.800 V8.200 M8 5.800 L6.800 7 L8 8.200 M9 5.800 L10.200 7 L9 8.200 M11 5.800 V8.200 M11.500 7 H13 M4 11.500 H5.500 M6 10.300 V12.700 M8 10.300 L6.800 11.500 L8 12.700 M9 10.300 V12.700 M10 10.300 L11.500 11.500 L10 12.700" fill="none" stroke="#b8bbc4" stroke-width="0.800"/></svg>
<svg style="left:718.8px;top:125.6px" width="19.2" height="19.2" viewBox="0 0 16 16"><defs><linearGradient id="bb" x1="0" x2="1" y1="0" y2="1"><stop offset="0" stop-color="#f6fbff"/><stop offset="0.5" stop-color="#b4d4f8"/><stop offset="1" stop-color="#98c2f0"/></linearGradient></defs><rect x="0.700" y="0.700" width="14.600" height="14.600" fill="url(#bb)" stroke="#4a5664" stroke-width="1.400"/><path d="M3 13 V6.500 H5 L6 5 H9.500 L10.500 6.500 H12.500 V13z" fill="#f8d040" stroke="#111" stroke-width="1.300"/><path d="M3.500 8.500 H12" stroke="#fff6c0" stroke-width="1"/><rect x="5.500" y="4.300" width="4" height="1.700" fill="#8a6a10"/><path d="M11.500 3 L12.500 6 L14.800 4 L13.500 7 L15 9 L12.500 8.500 L11 10.500 L11 7.500 L9 6.500 L11 6z" fill="#ff7a1a"/><path d="M12.200 5 L12.600 7.200" stroke="#fff2a0" stroke-width="0.900"/></svg>
<svg style="left:746.0px;top:125.6px" width="19.2" height="19.2" viewBox="0 0 16 16"><defs><linearGradient id="bb" x1="0" x2="1" y1="0" y2="1"><stop offset="0" stop-color="#f6fbff"/><stop offset="0.5" stop-color="#b4d4f8"/><stop offset="1" stop-color="#98c2f0"/></linearGradient></defs><rect x="0.700" y="0.700" width="14.600" height="14.600" fill="url(#bb)" stroke="#4a5664" stroke-width="1.400"/><path d="M2.500 7 H13.500 V13.500 H2.500z" fill="#a8e0b0" stroke="#111" stroke-width="1.300"/><path d="M2.500 7 L8 11.500 L13.500 7 M2.500 13.500 L6.500 10 M13.500 13.500 L9.500 10" fill="none" stroke="#111" stroke-width="1"/><path d="M5 8.500 V4 Q5 3 6 3 H10 Q11 3 11 4 V8.500 L8 10.500z" fill="#fff" stroke="#111" stroke-width="1"/><path d="M6.500 5 H9.500" stroke="#999" stroke-width="0.800"/></svg>
<svg style="left:773.4px;top:125.6px" width="19.2" height="19.2" viewBox="0 0 16 16"><defs><linearGradient id="bb" x1="0" x2="1" y1="0" y2="1"><stop offset="0" stop-color="#f6fbff"/><stop offset="0.5" stop-color="#b4d4f8"/><stop offset="1" stop-color="#98c2f0"/></linearGradient></defs><rect x="0.700" y="0.700" width="14.600" height="14.600" fill="url(#bb)" stroke="#4a5664" stroke-width="1.400"/><path d="M3 9 L5 4.500 H6 M13 9 L11 4.500 H10" fill="none" stroke="#111" stroke-width="1.100"/><circle cx="5" cy="10.300" r="2.600" fill="#f8b8b8" stroke="#111" stroke-width="1.200"/><circle cx="11" cy="10.300" r="2.600" fill="#f8b8b8" stroke="#111" stroke-width="1.200"/><path d="M7.300 9.500 Q8 8.800 8.700 9.500" fill="none" stroke="#111" stroke-width="1.100"/><path d="M5 4.500 Q8 2.500 11 4.500 L12 7 H4z" fill="#fff" opacity="0.850"/></svg>
<svg style="left:801.0px;top:125.6px" width="19.2" height="19.2" viewBox="0 0 16 16"><defs><linearGradient id="bb" x1="0" x2="1" y1="0" y2="1"><stop offset="0" stop-color="#f6fbff"/><stop offset="0.5" stop-color="#b4d4f8"/><stop offset="1" stop-color="#98c2f0"/></linearGradient></defs><rect x="0.700" y="0.700" width="14.600" height="14.600" fill="url(#bb)" stroke="#4a5664" stroke-width="1.400"/><path d="M4.200 3 H12 V5.300 H7 V7.300 H10.500 V9.500 H7 V13.500 H4.200z" fill="#9a4c10"/><path d="M4.200 3 H12 V4 H5.200 V13.500 H4.200z" fill="#c87830"/></svg>
<svg style="left:838.4px;top:125.6px" width="19.2" height="19.2" viewBox="0 0 16 16"><defs><linearGradient id="bb" x1="0" x2="1" y1="0" y2="1"><stop offset="0" stop-color="#f6fbff"/><stop offset="0.5" stop-color="#b4d4f8"/><stop offset="1" stop-color="#98c2f0"/></linearGradient></defs><rect x="0.700" y="0.700" width="14.600" height="14.600" fill="url(#bb)" stroke="#4a5664" stroke-width="1.400"/><rect x="3" y="3" width="10" height="2" fill="#e8d860" stroke="#111" stroke-width="0.900"/><path d="M8 5 V7.500 M4.500 7.500 H11.500 M4.500 7.500 V9 M11.500 7.500 V9" stroke="#111" stroke-width="1.100" fill="none"/><rect x="2.500" y="9" width="4.500" height="4" fill="#f06098" stroke="#111" stroke-width="1"/><rect x="9" y="9" width="4.500" height="4" fill="#40b8e8" stroke="#111" stroke-width="1"/><path d="M4 10 H6 V12" fill="none" stroke="#fff" stroke-width="0.800"/><path d="M10.500 10 H12.500 V12" fill="none" stroke="#fff" stroke-width="0.800"/></svg>
<svg style="left:866.0px;top:125.6px" width="19.2" height="19.2" viewBox="0 0 16 16"><rect x="0.800" y="1" width="14.500" height="13.800" rx="1.500" fill="#bfe4fa" stroke="#111" stroke-width="1.400"/><path d="M2 3.300 H14" stroke="#20a040" stroke-width="1.400" stroke-dasharray="1.300 0.700"/><path d="M4 6 L2.500 8 H3.500 V11 H2.500 L4 13 L5.500 11 H4.500 V8 H5.500z M8 6 L6.500 8 H7.500 V11 H6.500 L8 13 L9.500 11 H8.500 V8 H9.500z" fill="#6018e0"/><path d="M11 6 V13 M11 7.500 L13 9.500 L11 11.500z" fill="#6018e0" stroke="#6018e0" stroke-width="0.900"/></svg>
<svg style="left:893.4px;top:125.6px" width="19.2" height="19.2" viewBox="0 0 16 16"><rect x="1" y="7" width="14" height="7.800" fill="#b8eee0" stroke="#111" stroke-width="1.300"/><path d="M2.500 11.500 H13.500" stroke="#555" stroke-width="2.200" stroke-dasharray="1 0.700"/><path d="M4 3 H6 V6 H7.500 L5 9 L2.500 6 H4z M10 3 H12 V6 H13.500 L11 9 L8.500 6 H10z" fill="#28a848"/><path d="M2 2.500 L3 1 M5 1 V2 M7.500 1 L8.500 2.500 M11 1 V2 M13 1 L14 2.500" stroke="#48b868" stroke-width="0.900" stroke-dasharray="0.800 0.600"/></svg>
<svg style="left:931.0px;top:125.6px" width="19.2" height="19.2" viewBox="0 0 16 16"><defs><linearGradient id="gd" x1="0" x2="1" y1="0" y2="1"><stop offset="0" stop-color="#f4fbf4"/><stop offset="0.6" stop-color="#c0e8c4"/><stop offset="1" stop-color="#a0d8a8"/></linearGradient></defs><path d="M1 1 H11.500 L15 4.500 V15 H1z" fill="url(#gd)" stroke="#111" stroke-width="1.400"/><path d="M11.500 1 V4.500 H15" fill="#fff" stroke="#111" stroke-width="0.900"/><path d="M3 4.500 L8 11.500 L13 4.500" fill="none" stroke="#b0b0a0" stroke-width="2.200" transform="translate(0.600 0.800)"/><path d="M3 4.500 L8 11.500 L13 4.500" fill="none" stroke="#ff7a10" stroke-width="2.200"/></svg>
<svg style="left:958.4px;top:125.6px" width="19.2" height="19.2" viewBox="0 0 16 16"><defs><linearGradient id="gd" x1="0" x2="1" y1="0" y2="1"><stop offset="0" stop-color="#f4fbf4"/><stop offset="0.6" stop-color="#c0e8c4"/><stop offset="1" stop-color="#a0d8a8"/></linearGradient></defs><path d="M1 1 H11.500 L15 4.500 V15 H1z" fill="url(#gd)" stroke="#111" stroke-width="1.400"/><path d="M11.500 1 V4.500 H15" fill="#fff" stroke="#111" stroke-width="0.900"/><text x="8" y="12.5" font-family="Liberation Sans, sans-serif" font-size="12" fill="#1080ff" text-anchor="middle" font-weight="bold" stroke="#1080ff" stroke-width="0.700" font-family="Liberation Serif, serif">D</text></svg>
<svg style="left:986.0px;top:125.6px" width="19.2" height="19.2" viewBox="0 0 16 16"><defs><linearGradient id="gd" x1="0" x2="1" y1="0" y2="1"><stop offset="0" stop-color="#f4fbf4"/><stop offset="0.6" stop-color="#c0e8c4"/><stop offset="1" stop-color="#a0d8a8"/></linearGradient></defs><path d="M1 1 H11.500 L15 4.500 V15 H1z" fill="url(#gd)" stroke="#111" stroke-width="1.400"/><path d="M11.500 1 V4.500 H15" fill="#fff" stroke="#111" stroke-width="0.900"/><text x="5.8" y="12.5" font-family="Liberation Sans, sans-serif" font-size="11.5" fill="#2088f0" text-anchor="middle" font-weight="bold" transform="scale(0.85 1)" transform-origin="5.8 8">D</text><path d="M8.500 6.500 L10.700 11 L13 5.500 M10.700 11 V14" fill="none" stroke="#f09040" stroke-width="1.500"/></svg>
<svg style="left:1013.4px;top:125.6px" width="19.2" height="19.2" viewBox="0 0 16 16"><defs><linearGradient id="gd" x1="0" x2="1" y1="0" y2="1"><stop offset="0" stop-color="#f4fbf4"/><stop offset="0.6" stop-color="#c0e8c4"/><stop offset="1" stop-color="#a0d8a8"/></linearGradient></defs><path d="M1 1 H11.500 L15 4.500 V15 H1z" fill="url(#gd)" stroke="#111" stroke-width="1.400"/><path d="M11.500 1 V4.500 H15" fill="#fff" stroke="#111" stroke-width="0.900"/><text x="5.8" y="12.5" font-family="Liberation Sans, sans-serif" font-size="11.5" fill="#2088f0" text-anchor="middle" font-weight="bold" transform="scale(0.85 1)" transform-origin="5.8 8">D</text><path d="M13.500 8 Q10.500 5.500 9 9.500 Q9 13.800 13.500 12.500" fill="none" stroke="#f050d8" stroke-width="1.600"/></svg>
<svg style="left:1041.0px;top:125.6px" width="19.2" height="19.2" viewBox="0 0 16 16"><defs><linearGradient id="gd" x1="0" x2="1" y1="0" y2="1"><stop offset="0" stop-color="#f4fbf4"/><stop offset="0.6" stop-color="#c0e8c4"/><stop offset="1" stop-color="#a0d8a8"/></linearGradient></defs><path d="M1 1 H11.500 L15 4.500 V15 H1z" fill="url(#gd)" stroke="#111" stroke-width="1.400"/><path d="M11.500 1 V4.500 H15" fill="#fff" stroke="#111" stroke-width="0.900"/><path d="M3 3.500 L5.500 11 L8 3.500" fill="none" stroke="#f08830" stroke-width="1.500"/><path d="M13.500 8 Q10.500 5.500 9 9.500 Q9 13.800 13.500 12.500" fill="none" stroke="#f050d8" stroke-width="1.600"/></svg>
<svg style="left:1068.4px;top:125.6px" width="19.2" height="19.2" viewBox="0 0 16 16"><defs><linearGradient id="gd" x1="0" x2="1" y1="0" y2="1"><stop offset="0" stop-color="#f4fbf4"/><stop offset="0.6" stop-color="#c0e8c4"/><stop offset="1" stop-color="#a0d8a8"/></linearGradient></defs><path d="M1 1 H11.500 L15 4.500 V15 H1z" fill="url(#gd)" stroke="#111" stroke-width="1.400"/><path d="M11.500 1 V4.500 H15" fill="#fff" stroke="#111" stroke-width="0.900"/><text x="7.8" y="13.3" font-family="Liberation Sans, sans-serif" font-size="13.5" fill="#0a0a0a" text-anchor="middle" font-weight="bold" stroke="#0a0a0a" stroke-width="0.500">A</text></svg>
<svg style="left:1104.4px;top:125.6px" width="19.2" height="19.2" viewBox="0 0 16 16"><path d="M10.500 10.500 L14.500 14.500" stroke="#111" stroke-width="2.200" stroke-linecap="round"/><circle cx="6.800" cy="6.800" r="5.300" fill="#a8d0f6" stroke="#111" stroke-width="1.300"/><path d="M3.500 4.500 Q5 2.500 7.500 2.500" fill="none" stroke="#e8f4ff" stroke-width="1.200"/><path d="M3.800 6.800 H9.800 M6.800 3.800 V9.800" stroke="#3010d8" stroke-width="1.900"/></svg>
<svg style="left:1132.4px;top:125.6px" width="19.2" height="19.2" viewBox="0 0 16 16"><path d="M10.500 10.500 L14.500 14.500" stroke="#111" stroke-width="2.200" stroke-linecap="round"/><circle cx="6.800" cy="6.800" r="5.300" fill="#c4f08c" stroke="#111" stroke-width="1.300"/><path d="M3.500 4.500 Q5 2.500 7.500 2.500" fill="none" stroke="#f0ffd8" stroke-width="1.200"/><path d="M3.800 6.800 H9.800" stroke="#10a020" stroke-width="1.900"/></svg>
<svg style="left:1170.4px;top:125.6px" width="19.2" height="19.2" viewBox="0 0 16 16"><path d="M4.500 8 L1 11.500" stroke="#111" stroke-width="1.800"/><circle cx="6" cy="4.800" r="3.700" fill="#c8dcf8" stroke="#111" stroke-width="1.200"/><circle cx="6" cy="4.800" r="1.900" fill="#4010e0"/><path d="M6.500 11 H10 M13 11 H16 M10 7.500 V14.500 M13 7.500 V14.500" stroke="#ff8040" stroke-width="1.800" fill="none"/></svg>
<svg style="left:1198.4px;top:125.6px" width="19.2" height="19.2" viewBox="0 0 16 16"><path d="M4.500 8 L1 11.500" stroke="#92949c" stroke-width="1.600"/><circle cx="6" cy="4.800" r="3.700" fill="#eceef2" stroke="#b8bbc4" stroke-width="1.200"/><path d="M4 4.800 H8" stroke="#92949c" stroke-width="1.300"/><path d="M10 7.500 V14.500 M13 7.500 V14.500" stroke="#d8dae2" stroke-width="1.800" fill="none"/></svg>
<svg style="left:1236.4px;top:125.6px" width="19.2" height="19.2" viewBox="0 0 16 16"><path d="M1 1 V15 H15.500 V1" fill="#3a4048" stroke="#111" stroke-width="1.300"/><rect x="2.800" y="2.500" width="11" height="10" fill="#30d8e0" stroke="#111" stroke-width="0.900"/><path d="M4 4.500 H10 M4 6.500 H12.500 M4 8.500 H9 M4 10.500 H12" stroke="#0a3a40" stroke-width="1.100"/><path d="M1 13.800 H15.500" stroke="#111" stroke-width="1.200"/></svg>
<div style="position:absolute;left:830.1px;top:124px;width:1px;height:23px;background:#b9bfce;"></div>
<div style="position:absolute;left:831.1px;top:124px;width:1px;height:23px;background:#e3e7f0;"></div>
<div style="position:absolute;left:922.5px;top:124px;width:1px;height:23px;background:#b9bfce;"></div>
<div style="position:absolute;left:923.5px;top:124px;width:1px;height:23px;background:#e3e7f0;"></div>
<div style="position:absolute;left:1097.5px;top:124px;width:1px;height:23px;background:#b9bfce;"></div>
<div style="position:absolute;left:1098.5px;top:124px;width:1px;height:23px;background:#e3e7f0;"></div>
<div style="position:absolute;left:1162.5px;top:124px;width:1px;height:23px;background:#b9bfce;"></div>
<div style="position:absolute;left:1163.5px;top:124px;width:1px;height:23px;background:#e3e7f0;"></div>
<div style="position:absolute;left:1227.5px;top:124px;width:1px;height:23px;background:#b9bfce;"></div>
<div style="position:absolute;left:1228.5px;top:124px;width:1px;height:23px;background:#e3e7f0;"></div>
<div style="position:absolute;left:1263.6px;top:121.5px;width:214.4000000000001px;height:28.0px;background:#cfd6e6;box-shadow:0 0 0 1px #dbe0ec;"></div>
<svg style="left:1266px;top:122.5px" width="8" height="27" viewBox="0 0 8 27"><rect x="0.500" y="0.3" width="1.400" height="1.400" fill="#4d5263"/><rect x="5.700" y="0.3" width="1.400" height="1.400" fill="#4d5263"/><rect x="3.100" y="2.8" width="1.400" height="1.400" fill="#9ea4b4"/><rect x="0.500" y="5.3" width="1.400" height="1.400" fill="#4d5263"/><rect x="5.700" y="5.3" width="1.400" height="1.400" fill="#4d5263"/><rect x="3.100" y="7.8" width="1.400" height="1.400" fill="#9ea4b4"/><rect x="0.500" y="10.3" width="1.400" height="1.400" fill="#4d5263"/><rect x="5.700" y="10.3" width="1.400" height="1.400" fill="#4d5263"/><rect x="3.100" y="12.8" width="1.400" height="1.400" fill="#9ea4b4"/><rect x="0.500" y="15.3" width="1.400" height="1.400" fill="#4d5263"/><rect x="5.700" y="15.3" width="1.400" height="1.400" fill="#4d5263"/><rect x="3.100" y="17.8" width="1.400" height="1.400" fill="#9ea4b4"/><rect x="0.500" y="20.3" width="1.400" height="1.400" fill="#4d5263"/><rect x="5.700" y="20.3" width="1.400" height="1.400" fill="#4d5263"/><rect x="3.100" y="22.8" width="1.400" height="1.400" fill="#9ea4b4"/><rect x="0.500" y="25.3" width="1.400" height="1.400" fill="#4d5263"/><rect x="5.700" y="25.3" width="1.400" height="1.400" fill="#4d5263"/></svg>
<svg style="left:1278.4px;top:125.6px" width="19.2" height="19.2" viewBox="0 0 16 16"><rect x="3" y="6" width="12" height="9" fill="#a8e8e0" stroke="#111" stroke-width="1.300"/><path d="M2 1 H10.500 Q12 1 12 2.500 V7 Q12 8.500 10.500 8.500 H5.500 L4.500 10.500 L4 8.500 H2 Q0.800 8.500 0.800 7 V2.500 Q0.800 1 2 1z" fill="#fff" stroke="#e83060" stroke-width="1.300"/><path d="M2.500 3.200 H10 M2.500 4.800 H10 M2.500 6.400 H10" stroke="#999" stroke-width="0.700"/></svg>
<svg style="left:1315.4px;top:125.6px" width="19.2" height="19.2" viewBox="0 0 16 16"><circle cx="8" cy="8" r="6.300" fill="#2858d8" stroke="#111" stroke-width="1.300"/><path d="M3.500 5 Q5.500 2.500 8.500 2.800" fill="none" stroke="#9ab8f8" stroke-width="1.300"/><path d="M4.500 8 L7 10.500 L11.500 5" fill="none" stroke="#f02848" stroke-width="2"/></svg>
<svg style="left:1342.4px;top:125.6px" width="19.2" height="19.2" viewBox="0 0 16 16"><circle cx="8" cy="8" r="6.300" fill="#f05878" stroke="#111" stroke-width="1.300"/><path d="M3.500 5 Q5.500 2.500 8.500 2.800" fill="none" stroke="#fbb8c8" stroke-width="1.300"/><path d="M5 5 L11 11 M11 5 L5 11" stroke="#2848e0" stroke-width="2"/></svg>
<svg style="left:1371.1px;top:125.6px" width="19.2" height="19.2" viewBox="0 0 16 16"><path d="M1 6 H3 V12 H13 V6 H15 V14.500 H1z" fill="#c090e0" stroke="#111" stroke-width="1.200"/><path d="M3 5.500 Q5.500 4 8 6 Q10.500 4 13 5.500 V12 Q10.500 10.800 8 12.500 Q5.500 10.800 3 12z" fill="#fff" stroke="#111" stroke-width="1.200"/><path d="M8 6 V12.500" stroke="#111" stroke-width="1"/><path d="M2 1 L4.500 3.500 M4.500 1.500 V3.500 H2.500 M14 1 L11.500 3.500 M11.500 1.500 V3.500 H13.500" fill="none" stroke="#f02050" stroke-width="1.200"/></svg>
<svg style="left:1398.4px;top:125.6px" width="19.2" height="19.2" viewBox="0 0 16 16"><path d="M1 6 H3 V12 H13 V6 H15 V14.500 H1z" fill="#e4e6ec" stroke="#92949c" stroke-width="1.200"/><path d="M3 5.500 Q5.500 4 8 6 Q10.500 4 13 5.500 V12 Q10.500 10.800 8 12.500 Q5.500 10.800 3 12z" fill="#f2f3f6" stroke="#92949c" stroke-width="1.200"/><path d="M8 6 V12.500" stroke="#92949c" stroke-width="1"/><path d="M6 0.500 L10 4 M10 0.500 L6 4" stroke="#b8bbc4" stroke-width="1"/></svg>
<svg style="left:1426.1px;top:125.6px" width="19.2" height="19.2" viewBox="0 0 16 16"><path d="M1 6 H3 V12 H13 V6 H15 V14.500 H1z" fill="#e4e6ec" stroke="#92949c" stroke-width="1.200"/><path d="M3 5.500 Q5.500 4 8 6 Q10.500 4 13 5.500 V12 Q10.500 10.800 8 12.500 Q5.500 10.800 3 12z" fill="#f2f3f6" stroke="#92949c" stroke-width="1.200"/><path d="M8 6 V12.500" stroke="#92949c" stroke-width="1"/><path d="M10.500 4 Q9 0.500 6 2.500" fill="none" stroke="#b8bbc4" stroke-width="1"/><path d="M5 1 V4 H8z" fill="#b8bbc4"/></svg>
<svg style="left:1453.4px;top:125.6px" width="19.2" height="19.2" viewBox="0 0 16 16"><path d="M1 6 H3 V12 H13 V6 H15 V14.500 H1z" fill="#e4e6ec" stroke="#92949c" stroke-width="1.200"/><path d="M3 5.500 Q5.500 4 8 6 Q10.500 4 13 5.500 V12 Q10.500 10.800 8 12.500 Q5.500 10.800 3 12z" fill="#f2f3f6" stroke="#92949c" stroke-width="1.200"/><path d="M8 6 V12.500" stroke="#92949c" stroke-width="1"/><path d="M5.500 4 Q7 0.500 10 2.500" fill="none" stroke="#b8bbc4" stroke-width="1"/><path d="M11 1 V4 H8z" fill="#b8bbc4"/></svg>
<div style="position:absolute;left:1307.5px;top:124px;width:1px;height:23px;background:#b9bfce;"></div>
<div style="position:absolute;left:1308.5px;top:124px;width:1px;height:23px;background:#e3e7f0;"></div>
<div style="position:absolute;left:0px;top:151px;width:1920px;height:849px;background:#293955;"></div>
<div style="position:absolute;left:0px;top:159.8px;width:7.5px;height:83.6px;background:#485c7f;"></div>
<div class="t" style="left:13px;top:163.20px;font-size:16.3px;color:#fff;height:18px;line-height:18px;transform-origin:0 0;transform:rotate(90deg) translate(0,-100%) scaleX(0.9086);">Function/FB</div>
<div style="position:absolute;left:39px;top:151.8px;width:246px;height:27.2px;background:#4d6082;"></div>
<div class="t" style="left:44.40px;top:156.5px;font-size:15px;color:#fff;transform-origin:0 0;transform:scaleX(0.9219);">Project</div>
<svg style="left:215px;top:157px" width="70" height="18" viewBox="0 0 70 18"><path d="M3.900 6.900 h11 l-5.500 6z" fill="#fff"/><path d="M30.5 3.5 h5 v6 h-5z M28.5 9.5 h9 M33 9.5 v5" fill="none" stroke="#fff" stroke-width="1.4"/><path d="M52.700 4.600 l8.300 8.300 M61 4.600 l-8.300 8.300" stroke="#fff" stroke-width="1.800"/></svg>
<div style="position:absolute;left:39px;top:179px;width:246px;height:756px;background:#fff;"></div>
<div style="position:absolute;left:61px;top:181.3px;width:224px;height:20px;background:#d3dbeb;"></div>
<div class="t" style="left:87.70px;top:182.9px;font-size:15.5px;color:#1a1a2a;transform-origin:0 0;transform:scaleX(0.8074);">Pump</div>
<div class="t" style="left:124.50px;top:182.9px;font-size:15.5px;color:#1a1a2a;transform-origin:0 0;transform:scaleX(0.8120);">Control</div>
<div class="t" style="left:173.50px;top:182.9px;font-size:15.5px;color:#1a1a2a;transform-origin:0 0;transform:scaleX(0.8072);">with</div>
<div class="t" style="left:201.50px;top:182.9px;font-size:15.5px;color:#1a1a2a;transform-origin:0 0;transform:scaleX(0.8824);">3</div>
<div class="t" style="left:212.80px;top:182.9px;font-size:15.5px;color:#1a1a2a;transform-origin:0 0;transform:scaleX(0.8240);">Different</div>
<div class="t" style="left:267.00px;top:182.9px;font-size:15.5px;color:#1a1a2a;transform-origin:0 0;transform:scaleX(0.7308);">...</div>
<svg style="left:62.5px;top:181.5px" width="19.500" height="19.500" viewBox="0 0 18 18"><path d="M2 1.5 h14 M2 3.5 h14 M9 3.5 v10 M3.5 3.5 v3 M14.500 3.5 v3 M3.5 8 h11" stroke="#222" stroke-width="1.2" fill="none"/><rect x="1" y="6.5" width="6" height="4" rx="1" fill="#7fd08a" stroke="#222" stroke-width="1"/><rect x="11" y="6.5" width="6" height="4" rx="1" fill="#d9e36a" stroke="#222" stroke-width="1"/><rect x="4" y="13" width="10" height="3.6" rx="1" fill="#55d6de" stroke="#222" stroke-width="1"/></svg>
<svg style="left:45.7px;top:187.3px" width="8" height="8" viewBox="0 0 8 8"><path d="M7.200 0.500 v6.700 h-6.700z" fill="#5e5e5e"/></svg>
<div class="t" style="left:109.10px;top:204.2px;font-size:15.5px;color:#1a1a2a;transform-origin:0 0;transform:scaleX(0.8502);">Network Configuration</div>
<svg style="left:83.5px;top:202.5px" width="19.500" height="19.500" viewBox="0 0 18 18"><path d="M2 1.5 h14 M2 3.5 h14 M9 3.5 v10 M3.5 3.5 v3 M14.500 3.5 v3 M3.5 8 h11" stroke="#222" stroke-width="1.2" fill="none"/><rect x="1" y="6.5" width="6" height="4" rx="1" fill="#7fd08a" stroke="#222" stroke-width="1"/><rect x="11" y="6.5" width="6" height="4" rx="1" fill="#d9e36a" stroke="#222" stroke-width="1"/><rect x="4" y="13" width="10" height="3.6" rx="1" fill="#55d6de" stroke="#222" stroke-width="1"/></svg>
<svg style="left:67.0px;top:208.6px" width="8" height="8" viewBox="0 0 8 8"><path d="M7.200 0.500 v6.700 h-6.700z" fill="#5e5e5e"/></svg>
<div class="t" style="left:130.30px;top:225.4px;font-size:15.5px;color:#1a1a2a;transform-origin:0 0;transform:scaleX(0.8614);">Undefined Network</div>
<svg style="left:105.5px;top:223.5px" width="19.500" height="19.500" viewBox="0 0 18 18"><path d="M2 5.5 l3.5 -3.5 h10.500 v10 l-3.5 3.5 h-10.500z" fill="#dfe9f7" stroke="#222" stroke-width="1.3"/><path d="M2 5.5 h10.500 v10 M12.5 5.5 l3.5 -3.5" fill="none" stroke="#222" stroke-width="1.2"/><rect x="4.5" y="8" width="2.5" height="7" fill="#5b8fd6"/><rect x="8" y="8" width="2.5" height="7" fill="#9dbbe8"/></svg>
<svg style="left:88.3px;top:229.8px" width="8" height="8" viewBox="0 0 8 8"><path d="M7.200 0.500 v6.700 h-6.700z" fill="#5e5e5e"/></svg>
<div class="t" style="left:151.50px;top:246.7px;font-size:15.5px;color:#1a1a2a;transform-origin:0 0;transform:scaleX(0.8557);">NewPLC [B0S0 Inte...</div>
<svg style="left:126.5px;top:245.5px" width="19.500" height="19.500" viewBox="0 0 18 18"><rect x="4" y="1" width="7" height="6" fill="#b9d6f2" stroke="#222" stroke-width="1.2"/><path d="M2 9.500 h11 l1 2 h-13z" fill="#7aa7dd" stroke="#222" stroke-width="1"/><path d="M3.500 12 v4.5 h5 M13.500 7 h2.500 v6" fill="none" stroke="#2a6ae0" stroke-width="1.3"/><rect x="9" y="13.500" width="8.500" height="3.5" rx="1" fill="#d6df4a" stroke="#222" stroke-width="1"/></svg>
<div class="t" style="left:109.10px;top:267.9px;font-size:15.5px;color:#1a1a2a;transform-origin:0 0;transform:scaleX(0.8313);">System Variable</div>
<svg style="left:83.5px;top:266.5px" width="19.500" height="19.500" viewBox="0 0 18 18"><circle cx="11" cy="11" r="6" fill="#35a7b5" stroke="#222" stroke-width="1.2"/><path d="M7 9 q3 -3 5 0 t4 1 M6.500 13 q3 2 8 0" stroke="#e4f08a" stroke-width="1.5" fill="none"/><circle cx="9" cy="13" r="1.6" fill="#e0409a"/><circle cx="13.500" cy="8.500" r="1.500" fill="#4a5ee0"/><rect x="0.7" y="0.7" width="9" height="6.5" fill="#fff" stroke="#c050d0" stroke-width="1.2"/><path d="M2.500 2.500 l2.700 3 2.700 -3" stroke="#e02060" stroke-width="1.3" fill="none"/></svg>
<div class="t" style="left:109.10px;top:289.1px;font-size:15.5px;color:#1a1a2a;transform-origin:0 0;transform:scaleX(0.9535);font-weight:bold;">NewPLC(XBC-DxxxE)-...</div>
<svg style="left:83.5px;top:287.5px" width="19.500" height="19.500" viewBox="0 0 18 18"><path d="M2 5.5 l3.5 -3.5 h10.500 v10 l-3.5 3.5 h-10.500z" fill="#dfe9f7" stroke="#222" stroke-width="1.3"/><path d="M2 5.5 h10.500 v10 M12.5 5.5 l3.5 -3.5" fill="none" stroke="#222" stroke-width="1.2"/><rect x="4.5" y="8" width="2.5" height="7" fill="#5b8fd6"/><rect x="8" y="8" width="2.5" height="7" fill="#9dbbe8"/></svg>
<svg style="left:67.0px;top:293.6px" width="8" height="8" viewBox="0 0 8 8"><path d="M7.200 0.500 v6.700 h-6.700z" fill="#5e5e5e"/></svg>
<div class="t" style="left:130.30px;top:310.4px;font-size:15.5px;color:#1a1a2a;transform-origin:0 0;transform:scaleX(0.8424);">Variable/Comment</div>
<svg style="left:105.5px;top:309.5px" width="19.500" height="19.500" viewBox="0 0 18 18"><path d="M3 6 h13 v10 h-13z" fill="#cfe3f5" stroke="#222" stroke-width="1.3"/><path d="M3 6 l2 -2 2 2 2 -2 2 2 2 -2 2 2 1 -2" fill="none" stroke="#222" stroke-width="1.2"/><path d="M5 14 l5 -6 M9 14 l4 -5" stroke="#fff" stroke-width="1.3"/><path d="M3 13 h3 v3 h-3z M8 13 h3 v3 h-3z M13 13 h3 v3 h-3z" fill="#222"/><rect x="0.600" y="0.600" width="8" height="6" fill="#fff" stroke="#3aa050" stroke-width="1.1"/><path d="M2.200 2 l2.400 3 2.400 -3" stroke="#e02040" stroke-width="1.3" fill="none"/></svg>
<div class="t" style="left:130.30px;top:331.6px;font-size:15.5px;color:#1a1a2a;transform-origin:0 0;transform:scaleX(0.8194);">Parameter</div>
<svg style="left:105.5px;top:330.5px" width="19.500" height="19.500" viewBox="0 0 18 18"><rect x="1" y="1.500" width="13" height="12" fill="#e8eef7" stroke="#222" stroke-width="1.3"/><rect x="3" y="4" width="6" height="6" fill="#c7d6ea" stroke="#667" stroke-width="0.800"/><path d="M8 9 q0 -2 1.500 -2 l0.500 3 q1 -1.500 2 -1 q1 -0.500 1.500 0.500 q1.500 0 1.500 1.500 q0.500 3 -1 5 h-4.500 q-2.500 -3 -3.500 -5 q1 -1.200 2 0.500z" fill="#f3c9a0" stroke="#5a3a20" stroke-width="0.900"/></svg>
<svg style="left:88.3px;top:336.1px" width="8" height="8" viewBox="0 0 8 8"><path d="M7.200 0.500 v6.700 h-6.700z" fill="#5e5e5e"/></svg>
<div class="t" style="left:151.50px;top:352.9px;font-size:15.5px;color:#1a1a2a;transform-origin:0 0;transform:scaleX(0.8410);">Basic Parameter</div>
<svg style="left:126.5px;top:351.5px" width="19.500" height="19.500" viewBox="0 0 18 18"><path d="M1 4 v-3 h3 M14 1 h3 v3 M17 14 v3 h-3 M4 17 h-3 v-3" fill="none" stroke="#2aa040" stroke-width="1.300"/><rect x="3" y="3" width="12" height="12" fill="#aebbd2" stroke="#222" stroke-width="1.300"/><rect x="6" y="6" width="6" height="6" fill="#fff" stroke="#222" stroke-width="1.200"/><path d="M8 8 h2 v2" stroke="#222" fill="none"/></svg>
<div class="t" style="left:151.50px;top:374.1px;font-size:15.5px;color:#1a1a2a;transform-origin:0 0;transform:scaleX(0.8524);">I/O Parameter</div>
<svg style="left:126.5px;top:372.5px" width="19.500" height="19.500" viewBox="0 0 18 18"><path d="M1 4 v-3 h3 M14 1 h3 v3 M17 14 v3 h-3 M4 17 h-3 v-3" fill="none" stroke="#2aa040" stroke-width="1.300"/><rect x="3" y="3" width="12" height="12" fill="#aebbd2" stroke="#222" stroke-width="1.300"/><rect x="5" y="5.500" width="8" height="7" fill="#f7c6d0" stroke="#222" stroke-width="1.200"/><path d="M6 6.500 l3.500 3.500 M6 6.500 h3 M6 6.500 v3" stroke="#d02040" stroke-width="1.200" fill="none"/><rect x="10" y="8" width="3" height="4" fill="#fff" stroke="#222" stroke-width="0.800"/></svg>
<div class="t" style="left:151.50px;top:395.4px;font-size:15.5px;color:#1a1a2a;transform-origin:0 0;transform:scaleX(0.8359);">Internal Parameter</div>
<svg style="left:126.5px;top:393.5px" width="19.500" height="19.500" viewBox="0 0 18 18"><path d="M1 4 v-3 h3 M14 1 h3 v3 M17 14 v3 h-3 M4 17 h-3 v-3" fill="none" stroke="#2aa040" stroke-width="1.300"/><rect x="3" y="3" width="12" height="12" fill="#aebbd2" stroke="#222" stroke-width="1.300"/><rect x="6" y="6" width="6" height="6" fill="#cfd4e0" stroke="#222" stroke-width="1.200"/><path d="M4 4 l2 2 M14 4 l-2 2 M4 14 l2 -2 M14 14 l-2 -2" stroke="#222" stroke-width="1"/></svg>
<svg style="left:107.9px;top:398.5px" width="8" height="10" viewBox="0 0 8 10"><path d="M1.5 0.8 l5 4.2 -5 4.2z" fill="#fff" stroke="#8a8a8a" stroke-width="1"/></svg>
<div class="t" style="left:130.30px;top:416.6px;font-size:15.5px;color:#1a1a2a;transform-origin:0 0;transform:scaleX(0.8343);">Scan Program</div>
<svg style="left:105.5px;top:415.5px" width="19.500" height="19.500" viewBox="0 0 18 18"><path d="M2 5 l3 -2.500 h11 v11 l-3 2.500 h-11z" fill="#e6ebf3" stroke="#222" stroke-width="1.300"/><path d="M2 5 h11 v11 M13 5 l3 -2.500" fill="none" stroke="#222" stroke-width="1.200"/><rect x="6" y="0.500" width="7" height="2.500" rx="1" fill="#e04060"/><rect x="7" y="0" width="5" height="1.500" fill="#30a060"/><path d="M5 11 a3 3 0 1 1 3 3 M4 9 l1 2.500 2 -1.500" fill="none" stroke="#209050" stroke-width="1.400"/></svg>
<svg style="left:88.3px;top:421.1px" width="8" height="8" viewBox="0 0 8 8"><path d="M7.200 0.500 v6.700 h-6.700z" fill="#5e5e5e"/></svg>
<div class="t" style="left:151.50px;top:437.9px;font-size:15.5px;color:#1a1a2a;transform-origin:0 0;transform:scaleX(0.8298);">NewProgram</div>
<svg style="left:126.5px;top:436.5px" width="19.500" height="19.500" viewBox="0 0 18 18"><path d="M2 4 h14 v13 h-14z" fill="#fbe4e4" stroke="#222" stroke-width="1.300"/><path d="M2 4 l2 -2.500 h5 l2 2.500" fill="#e04060" stroke="#802030" stroke-width="0.800"/><path d="M4 8 h10 M4 12 h10 M6 6.500 v3 M8 6.500 v3 M11 6.500 v3 M6 10.500 v3 M9 10.500 v3 M12 10.500 v3" stroke="#a04848" stroke-width="0.900"/></svg>
<div style="position:absolute;left:69.7px;top:202px;width:1.2px;height:2px;background:#b0b0b0;"></div>
<div style="position:absolute;left:69.7px;top:205.5px;width:1.2px;height:1.8000000000000114px;background:#b0b0b0;"></div>
<div style="position:absolute;left:69.7px;top:217.5px;width:1.2px;height:73.5px;background:#b0b0b0;"></div>
<div style="position:absolute;left:76px;top:211.4px;width:5px;height:1.2px;background:#b0b0b0;"></div>
<div style="position:absolute;left:70.3px;top:276.2px;width:10.700000000000003px;height:1.2px;background:#b0b0b0;"></div>
<div style="position:absolute;left:76px;top:296.4px;width:5px;height:1.2px;background:#b0b0b0;"></div>
<div style="position:absolute;left:90.9px;top:224px;width:1.2px;height:1.5px;background:#b0b0b0;"></div>
<div style="position:absolute;left:90.9px;top:226.5px;width:1.2px;height:1.5px;background:#b0b0b0;"></div>
<div style="position:absolute;left:98px;top:232.6px;width:4.700000000000003px;height:1.2px;background:#b0b0b0;"></div>
<div style="position:absolute;left:112.4px;top:244.8px;width:1.2px;height:10.899999999999977px;background:#b0b0b0;"></div>
<div style="position:absolute;left:113px;top:255.1px;width:10.200000000000003px;height:1.2px;background:#b0b0b0;"></div>
<div style="position:absolute;left:91.10000000000001px;top:309.3px;width:1.2px;height:24.19999999999999px;background:#b0b0b0;"></div>
<div style="position:absolute;left:91.10000000000001px;top:345.2px;width:1.2px;height:73.19999999999999px;background:#b0b0b0;"></div>
<div style="position:absolute;left:91.7px;top:318.4px;width:10.599999999999994px;height:1.2px;background:#b0b0b0;"></div>
<div style="position:absolute;left:97.6px;top:338.7px;width:4.700000000000003px;height:1.2px;background:#b0b0b0;"></div>
<div style="position:absolute;left:97.6px;top:423.7px;width:4.700000000000003px;height:1.2px;background:#b0b0b0;"></div>
<div style="position:absolute;left:112.30000000000001px;top:351.4px;width:1.2px;height:45.200000000000045px;background:#b0b0b0;"></div>
<div style="position:absolute;left:112.9px;top:361.2px;width:10.899999999999991px;height:1.2px;background:#b0b0b0;"></div>
<div style="position:absolute;left:112.9px;top:382.29999999999995px;width:10.899999999999991px;height:1.2px;background:#b0b0b0;"></div>
<div style="position:absolute;left:119.4px;top:402.2px;width:4.3999999999999915px;height:1.2px;background:#b0b0b0;"></div>
<div style="position:absolute;left:112.30000000000001px;top:436.3px;width:1.2px;height:10.399999999999977px;background:#b0b0b0;"></div>
<div style="position:absolute;left:112.9px;top:446.09999999999997px;width:10.899999999999991px;height:1.2px;background:#b0b0b0;"></div>
<div style="position:absolute;left:39px;top:935px;width:246px;height:28px;background:#4d6082;"></div>
<div style="position:absolute;left:39px;top:935px;width:58px;height:27px;background:#fff;"></div>
<div class="t" style="left:46.70px;top:940.7px;font-size:14.8px;color:#0e70c0;transform-origin:0 0;transform:scaleX(0.9413);">Project</div>
<div class="t" style="left:106.00px;top:942px;font-size:14.8px;color:#e6ebf5;transform-origin:0 0;transform:scaleX(0.9828);-webkit-text-stroke:0.2px #e6ebf5;">View High-sp...</div>
<div class="t" style="left:216.70px;top:942px;font-size:14.8px;color:#e6ebf5;transform-origin:0 0;transform:scaleX(0.9035);-webkit-text-stroke:0.2px #e6ebf5;">View P2P</div>
<svg style="left:452px;top:153.800px" width="330" height="23" viewBox="0 0 330 23"><path d="M0 22 V1 L3 1 Q5 1 5 0.500 H142 Q144 0.500 144 3 V22z" fill="#ced6e7"/><path d="M145 22 V1 H287 H320 Q322.500 1 322.500 3.500 V22z" fill="#ced6e7"/><path d="M144.500 2 V22" stroke="#8e9bbc" stroke-width="1"/><path d="M0.500 2 V22" stroke="#8e9bbc" stroke-width="1"/><path d="M-1.500 0 H4.200 L0.800 4z M143 0 H148.700 L145.300 4z" fill="#293955"/></svg>
<svg style="left:293px;top:154px" width="160" height="23" viewBox="0 0 160 23"><path d="M0 23 V21.500 L21 0.500 H156 Q158.500 0.500 158.500 3 V23z" fill="#fff"/></svg>
<div style="position:absolute;left:293px;top:176px;width:1588.3px;height:787.3px;background:#fff;"></div>
<div class="t" style="left:334.30px;top:158px;font-size:14.3px;color:#111;transform-origin:0 0;transform:scaleX(0.9716);font-weight:bold;">NewProgram</div>
<div class="t" style="left:476.00px;top:158px;font-size:14.3px;color:#1e1e1e;transform-origin:0 0;transform:scaleX(0.9821);-webkit-text-stroke:0.2px #1e1e1e;">I/O Parameter</div>
<div class="t" style="left:622.50px;top:158px;font-size:14.3px;color:#1e1e1e;transform-origin:0 0;transform:scaleX(0.9991);-webkit-text-stroke:0.2px #1e1e1e;">Variable/Comment</div>
<svg style="left:435.5px;top:160.500px" width="10" height="10" viewBox="0 0 10 10"><path d="M1 1 l8 8 M9 1 l-8 8" stroke="#6e6e6e" stroke-width="2"/></svg>
<svg style="left:580.5px;top:160.500px" width="10" height="10" viewBox="0 0 10 10"><path d="M1 1 l8 8 M9 1 l-8 8" stroke="#6e6e6e" stroke-width="2"/></svg>
<svg style="left:758px;top:160.500px" width="10" height="10" viewBox="0 0 10 10"><path d="M1 1 l8 8 M9 1 l-8 8" stroke="#6e6e6e" stroke-width="2"/></svg>
<svg style="left:1864px;top:162px" width="12" height="8" viewBox="0 0 12 8"><path d="M0.500 0.500 h11 l-5.500 6z" fill="#fff"/></svg>
<div style="position:absolute;left:299.3px;top:182px;width:1573.7px;height:1.8px;background:#8a8a8a;"></div>
<div style="position:absolute;left:299.3px;top:182px;width:2px;height:772.5px;background:#808080;"></div>
<div style="position:absolute;left:301px;top:184px;width:110px;height:751px;background:#efefef;"></div>
<div style="position:absolute;left:411px;top:184px;width:1px;height:751px;background:#4a4a4a;"></div>
<div style="position:absolute;left:412px;top:184px;width:2px;height:751px;background:#000;"></div>
<div style="position:absolute;left:1763.5px;top:184px;width:2.8px;height:750px;background:#000;"></div>
<div class="c" style="left:301.6px;width:110px;top:213.80px;font-size:17px;color:#1b931b;">Comment</div>
<div class="t" style="left:414px;top:214.15px;font-size:17.5px;color:#1b931b;">BUITTON 2</div>
<div class="c" style="left:410.6px;width:140px;top:275.15px;font-size:17.5px;color:#111;">M0000</div>
<div class="c" style="left:410.6px;width:140px;top:326.25px;font-size:17.5px;color:#1a1aff;">SYSTEM_O</div>
<div class="c" style="left:410.6px;width:140px;top:347.25px;font-size:17.5px;color:#1a1aff;">N</div>
<div class="c" style="left:545.6px;width:140px;top:275.15px;font-size:17.5px;color:#111;">P0003</div>
<div class="c" style="left:545.6px;width:140px;top:326.25px;font-size:17.5px;color:#1a1aff;">RUN_2</div>
<div class="c" style="left:680.6px;width:140px;top:275.15px;font-size:17.5px;color:#111;">P0002</div>
<div class="c" style="left:680.6px;width:140px;top:326.25px;font-size:17.5px;color:#1a1aff;">RUN_1</div>
<div class="c" style="left:815.6px;width:140px;top:275.15px;font-size:17.5px;color:#111;">P0004</div>
<div class="c" style="left:815.6px;width:140px;top:326.25px;font-size:17.5px;color:#1a1aff;">RUN_3</div>
<div class="c" style="left:1625.6px;width:140px;top:275.15px;font-size:17.5px;color:#111;">P0042</div>
<div class="c" style="left:1625.6px;width:140px;top:326.25px;font-size:17.5px;color:#1a1aff;">LAMP_2</div>
<div class="t" style="left:301px;width:101.600px;text-align:right;top:365.15px;font-size:17.5px;color:#1a1aff;">14</div>
<div class="c" style="left:545.6px;width:140px;top:401.25px;font-size:17.5px;color:#111;">P0042</div>
<div class="c" style="left:545.6px;width:140px;top:451.25px;font-size:17.5px;color:#1a1aff;">LAMP_2</div>
<div class="c" style="left:301.6px;width:110px;top:509.80px;font-size:17px;color:#1b931b;">Comment</div>
<div class="t" style="left:414px;top:510.15px;font-size:17.5px;color:#1b931b;">BUTTON 3</div>
<div class="c" style="left:410.6px;width:140px;top:571.15px;font-size:17.5px;color:#111;">M0000</div>
<div class="c" style="left:410.6px;width:140px;top:622.25px;font-size:17.5px;color:#1a1aff;">SYSTEM_O</div>
<div class="c" style="left:410.6px;width:140px;top:643.25px;font-size:17.5px;color:#1a1aff;">N</div>
<div class="c" style="left:545.6px;width:140px;top:571.15px;font-size:17.5px;color:#111;">P0004</div>
<div class="c" style="left:545.6px;width:140px;top:622.25px;font-size:17.5px;color:#1a1aff;">RUN_3</div>
<div class="c" style="left:680.6px;width:140px;top:571.15px;font-size:17.5px;color:#111;">P0003</div>
<div class="c" style="left:680.6px;width:140px;top:622.25px;font-size:17.5px;color:#1a1aff;">RUN_2</div>
<div class="c" style="left:815.6px;width:140px;top:571.15px;font-size:17.5px;color:#111;">P0002</div>
<div class="c" style="left:815.6px;width:140px;top:622.25px;font-size:17.5px;color:#1a1aff;">RUN_1</div>
<div class="c" style="left:1625.6px;width:140px;top:571.15px;font-size:17.5px;color:#111;">P0043</div>
<div class="c" style="left:1625.6px;width:140px;top:622.25px;font-size:17.5px;color:#1a1aff;">LAMP_3</div>
<div class="t" style="left:301px;width:101.600px;text-align:right;top:661.15px;font-size:17.5px;color:#1a1aff;">22</div>
<div class="c" style="left:545.6px;width:140px;top:697.25px;font-size:17.5px;color:#111;">P0043</div>
<div class="c" style="left:545.6px;width:140px;top:747.25px;font-size:17.5px;color:#1a1aff;">LAMP_3</div>
<div class="c" style="left:301.6px;width:110px;top:805.80px;font-size:17px;color:#1b931b;">Comment</div>
<div class="t" style="left:414px;top:806.15px;font-size:17.5px;color:#1b931b;">OUTPUT PUMP</div>
<div style="position:absolute;left:301px;top:184px;width:1470px;height:750.500px;overflow:hidden;">
<div class="c" style="left:109.6px;width:140px;top:734.25px;font-size:17.5px;color:#1a1aff;">LAMP_1</div>
<div class="c" style="left:1324.6px;width:140px;top:734.25px;font-size:17.5px;color:#1a1aff;">PUMP</div>
<div class="t" style="left:0px;width:101.600px;text-align:right;top:746.15px;font-size:17.5px;color:#1a1aff;">30</div>
</div>
<div class="c" style="left:410.6px;width:140px;top:867.15px;font-size:17.5px;color:#111;">P0041</div>
<div class="c" style="left:1625.6px;width:140px;top:867.15px;font-size:17.5px;color:#111;">P0040</div>
<svg style="left:0;top:0" width="1920" height="1027" viewBox="0 0 1920 1027"><path d="M549.4 186.500 V934" stroke="#e5e5fb" stroke-width="1.500" stroke-dasharray="4 3.500" fill="none"/><path d="M684.4 186.500 V934" stroke="#e5e5fb" stroke-width="1.500" stroke-dasharray="4 3.500" fill="none"/><path d="M819.4 186.500 V934" stroke="#e5e5fb" stroke-width="1.500" stroke-dasharray="4 3.500" fill="none"/><path d="M954.4 186.500 V934" stroke="#e5e5fb" stroke-width="1.500" stroke-dasharray="4 3.500" fill="none"/><path d="M1089.4 186.500 V934" stroke="#e5e5fb" stroke-width="1.500" stroke-dasharray="4 3.500" fill="none"/><path d="M1224.4 186.500 V934" stroke="#e5e5fb" stroke-width="1.500" stroke-dasharray="4 3.500" fill="none"/><path d="M1359.4 186.500 V934" stroke="#e5e5fb" stroke-width="1.500" stroke-dasharray="4 3.500" fill="none"/><path d="M1494.4 186.500 V934" stroke="#e5e5fb" stroke-width="1.500" stroke-dasharray="4 3.500" fill="none"/><path d="M1629.4 186.500 V934" stroke="#e5e5fb" stroke-width="1.500" stroke-dasharray="4 3.500" fill="none"/><path d="M414 258.6 H1764" stroke="#e5e5fb" stroke-width="1.500" stroke-dasharray="4 3.500" stroke-dashoffset="2" fill="none"/><path d="M301 257.5 H411" stroke="#8a8a8a" stroke-width="1.600" fill="none"/><path d="M414 383.1 H1764" stroke="#e5e5fb" stroke-width="1.500" stroke-dasharray="4 3.500" stroke-dashoffset="2" fill="none"/><path d="M301 382.0 H411" stroke="#8a8a8a" stroke-width="1.600" fill="none"/><path d="M414 480.6 H1764" stroke="#e5e5fb" stroke-width="1.500" stroke-dasharray="4 3.500" stroke-dashoffset="2" fill="none"/><path d="M301 479.5 H411" stroke="#8a8a8a" stroke-width="1.600" fill="none"/><path d="M414 554.6 H1764" stroke="#e5e5fb" stroke-width="1.500" stroke-dasharray="4 3.500" stroke-dashoffset="2" fill="none"/><path d="M301 553.5 H411" stroke="#8a8a8a" stroke-width="1.600" fill="none"/><path d="M414 679.1 H1764" stroke="#e5e5fb" stroke-width="1.500" stroke-dasharray="4 3.500" stroke-dashoffset="2" fill="none"/><path d="M301 678.0 H411" stroke="#8a8a8a" stroke-width="1.600" fill="none"/><path d="M414 776.6 H1764" stroke="#e5e5fb" stroke-width="1.500" stroke-dasharray="4 3.500" stroke-dashoffset="2" fill="none"/><path d="M301 775.5 H411" stroke="#8a8a8a" stroke-width="1.600" fill="none"/><path d="M414 850.6 H1764" stroke="#e5e5fb" stroke-width="1.500" stroke-dasharray="4 3.500" stroke-dashoffset="2" fill="none"/><path d="M301 849.5 H411" stroke="#8a8a8a" stroke-width="1.600" fill="none"/><path d="M468.0 296.3 V320.3" stroke="#2a2a2a" stroke-width="1.5" fill="none"/><path d="M495.0 296.3 V320.3" stroke="#2a2a2a" stroke-width="1.5" fill="none"/><path d="M414 308.3 H468.0" stroke="#2a2a2a" stroke-width="1.5" fill="none"/><path d="M603.0 296.3 V320.3" stroke="#2a2a2a" stroke-width="1.5" fill="none"/><path d="M630.0 296.3 V320.3" stroke="#2a2a2a" stroke-width="1.5" fill="none"/><path d="M495.0 308.3 H603.0" stroke="#2a2a2a" stroke-width="1.5" fill="none"/><path d="M738.0 296.3 V320.3" stroke="#2a2a2a" stroke-width="1.5" fill="none"/><path d="M765.0 296.3 V320.3" stroke="#2a2a2a" stroke-width="1.5" fill="none"/><path d="M745.0 319.8 L757.5 297.3" stroke="#2a2a2a" stroke-width="1.5" fill="none"/><path d="M630.0 308.3 H738.0" stroke="#2a2a2a" stroke-width="1.5" fill="none"/><path d="M873.0 296.3 V320.3" stroke="#2a2a2a" stroke-width="1.5" fill="none"/><path d="M900.0 296.3 V320.3" stroke="#2a2a2a" stroke-width="1.5" fill="none"/><path d="M880.0 319.8 L892.5 297.3" stroke="#2a2a2a" stroke-width="1.5" fill="none"/><path d="M765.0 308.3 H873.0" stroke="#2a2a2a" stroke-width="1.5" fill="none"/><path d="M1686.5 299.8 Q1680.5 303.3 1680.5 308.3 Q1680.5 313.3 1686.5 316.8" stroke="#2a2a2a" stroke-width="1.5" fill="none"/><path d="M1705.0 298.8 Q1712.8 303.3 1712.8 308.3 Q1712.8 313.3 1705.0 317.8" stroke="#2a2a2a" stroke-width="1.5" fill="none"/><path d="M900.0 308.3 H1680.5" stroke="#2a2a2a" stroke-width="1.5" fill="none"/><path d="M1713.5 308.3 H1764" stroke="#2a2a2a" stroke-width="1.5" fill="none"/><path d="M549.5 308.3 V435.05" stroke="#2a2a2a" stroke-width="1.5" fill="none"/><path d="M684.5 308.3 V435.05" stroke="#2a2a2a" stroke-width="1.5" fill="none"/><path d="M603.0 422.3 V446.3" stroke="#2a2a2a" stroke-width="1.5" fill="none"/><path d="M630.0 422.3 V446.3" stroke="#2a2a2a" stroke-width="1.5" fill="none"/><path d="M548.75 434.3 H603.0" stroke="#2a2a2a" stroke-width="1.5" fill="none"/><path d="M630.0 434.3 H685.25" stroke="#2a2a2a" stroke-width="1.5" fill="none"/><path d="M468.0 592.3 V616.3" stroke="#2a2a2a" stroke-width="1.5" fill="none"/><path d="M495.0 592.3 V616.3" stroke="#2a2a2a" stroke-width="1.5" fill="none"/><path d="M414 604.3 H468.0" stroke="#2a2a2a" stroke-width="1.5" fill="none"/><path d="M603.0 592.3 V616.3" stroke="#2a2a2a" stroke-width="1.5" fill="none"/><path d="M630.0 592.3 V616.3" stroke="#2a2a2a" stroke-width="1.5" fill="none"/><path d="M495.0 604.3 H603.0" stroke="#2a2a2a" stroke-width="1.5" fill="none"/><path d="M738.0 592.3 V616.3" stroke="#2a2a2a" stroke-width="1.5" fill="none"/><path d="M765.0 592.3 V616.3" stroke="#2a2a2a" stroke-width="1.5" fill="none"/><path d="M745.0 615.8 L757.5 593.3" stroke="#2a2a2a" stroke-width="1.5" fill="none"/><path d="M630.0 604.3 H738.0" stroke="#2a2a2a" stroke-width="1.5" fill="none"/><path d="M873.0 592.3 V616.3" stroke="#2a2a2a" stroke-width="1.5" fill="none"/><path d="M900.0 592.3 V616.3" stroke="#2a2a2a" stroke-width="1.5" fill="none"/><path d="M880.0 615.8 L892.5 593.3" stroke="#2a2a2a" stroke-width="1.5" fill="none"/><path d="M765.0 604.3 H873.0" stroke="#2a2a2a" stroke-width="1.5" fill="none"/><path d="M1686.5 595.8 Q1680.5 599.3 1680.5 604.3 Q1680.5 609.3 1686.5 612.8" stroke="#2a2a2a" stroke-width="1.5" fill="none"/><path d="M1705.0 594.8 Q1712.8 599.3 1712.8 604.3 Q1712.8 609.3 1705.0 613.8" stroke="#2a2a2a" stroke-width="1.5" fill="none"/><path d="M900.0 604.3 H1680.5" stroke="#2a2a2a" stroke-width="1.5" fill="none"/><path d="M1713.5 604.3 H1764" stroke="#2a2a2a" stroke-width="1.5" fill="none"/><path d="M549.5 604.3 V731.05" stroke="#2a2a2a" stroke-width="1.5" fill="none"/><path d="M684.5 604.3 V731.05" stroke="#2a2a2a" stroke-width="1.5" fill="none"/><path d="M603.0 718.3 V742.3" stroke="#2a2a2a" stroke-width="1.5" fill="none"/><path d="M630.0 718.3 V742.3" stroke="#2a2a2a" stroke-width="1.5" fill="none"/><path d="M548.75 730.3 H603.0" stroke="#2a2a2a" stroke-width="1.5" fill="none"/><path d="M630.0 730.3 H685.25" stroke="#2a2a2a" stroke-width="1.5" fill="none"/><path d="M468.0 888.3 V912.3" stroke="#2a2a2a" stroke-width="1.5" fill="none"/><path d="M495.0 888.3 V912.3" stroke="#2a2a2a" stroke-width="1.5" fill="none"/><path d="M414 900.3 H468.0" stroke="#2a2a2a" stroke-width="1.5" fill="none"/><path d="M1686.5 891.8 Q1680.5 895.3 1680.5 900.3 Q1680.5 905.3 1686.5 908.8" stroke="#2a2a2a" stroke-width="1.5" fill="none"/><path d="M1705.0 890.8 Q1712.8 895.3 1712.8 900.3 Q1712.8 905.3 1705.0 909.8" stroke="#2a2a2a" stroke-width="1.5" fill="none"/><path d="M495.0 900.3 H1680.5" stroke="#2a2a2a" stroke-width="1.5" fill="none"/><path d="M1713.5 900.3 H1764" stroke="#2a2a2a" stroke-width="1.5" fill="none"/><path d="M549.5 900.3 V934" stroke="#2a2a2a" stroke-width="1.5" fill="none"/></svg>
<div style="position:absolute;left:1853px;top:184px;width:21px;height:751px;background:#f0f0f0;"></div>
<div style="position:absolute;left:301.3px;top:935px;width:1572.7px;height:21px;background:#f0f0f0;"></div>
<div style="position:absolute;left:1853px;top:184px;width:20px;height:8px;background:#f4f4f4;border-right:2px solid #808080;border-bottom:2px solid #808080;box-sizing:border-box;"></div>
<div style="position:absolute;left:1853px;top:296px;width:18px;height:96.2px;background:#cdcdcd;"></div>
<div style="position:absolute;left:322px;top:936px;width:1330px;height:17px;background:#cdcdcd;"></div>
<svg style="left:1856px;top:199px" width="12" height="9" viewBox="0 0 12 9"><path d="M1.500 7 L6 2.500 L10.500 7" fill="none" stroke="#5a5a5a" stroke-width="2"/></svg>
<svg style="left:1856px;top:919px" width="12" height="9" viewBox="0 0 12 9"><path d="M1.500 2 L6 6.500 L10.500 2" fill="none" stroke="#5a5a5a" stroke-width="2"/></svg>
<svg style="left:307px;top:938px" width="9" height="12" viewBox="0 0 9 12"><path d="M7 1.500 L2.500 6 L7 10.500" fill="none" stroke="#5a5a5a" stroke-width="2"/></svg>
<svg style="left:1837px;top:938px" width="9" height="12" viewBox="0 0 9 12"><path d="M2 1.500 L6.500 6 L2 10.500" fill="none" stroke="#5a5a5a" stroke-width="2"/></svg>
<svg style="left:1858px;top:941px" width="12" height="12" viewBox="0 0 12 12"><rect x="8" y="1" width="2" height="2" fill="#bdbdbd"/><rect x="5" y="4.5" width="2" height="2" fill="#bdbdbd"/><rect x="8" y="4.5" width="2" height="2" fill="#bdbdbd"/><rect x="1.5" y="8.5" width="2" height="2" fill="#bdbdbd"/><rect x="5" y="8.5" width="2" height="2" fill="#bdbdbd"/><rect x="8" y="8.5" width="2" height="2" fill="#bdbdbd"/></svg>
<div style="position:absolute;left:1912.5px;top:160px;width:7.5px;height:105.7px;background:#465a7d;"></div>
<div style="position:absolute;left:1912.5px;top:272.4px;width:7.5px;height:113.6px;background:#465a7d;"></div>
<div class="t" style="left:1887.6px;top:163.90px;font-size:16.3px;color:#fff;height:18px;line-height:18px;transform-origin:0 0;transform:rotate(90deg) translate(0,-100%) scaleX(0.9081);">System catalog</div>
<div class="t" style="left:1887.6px;top:276.00px;font-size:16.3px;color:#fff;height:18px;line-height:18px;transform-origin:0 0;transform:rotate(90deg) translate(0,-100%) scaleX(0.9260);">EDS information</div>
<div style="position:absolute;left:47px;top:992px;width:43px;height:8px;background:#4d6082;"></div>
<div class="t" style="left:50.30px;top:972.2px;font-size:14.8px;color:#fff;transform-origin:0 0;transform:scaleX(0.9509);-webkit-text-stroke:0.18px #fff;">Result</div>
<div style="position:absolute;left:96px;top:992px;width:99px;height:8px;background:#4d6082;"></div>
<div class="t" style="left:99.00px;top:972.2px;font-size:14.8px;color:#fff;transform-origin:0 0;transform:scaleX(0.9366);-webkit-text-stroke:0.18px #fff;">Check Program</div>
<div style="position:absolute;left:201px;top:992px;width:43px;height:8px;background:#4d6082;"></div>
<div class="t" style="left:204.00px;top:972.2px;font-size:14.8px;color:#fff;transform-origin:0 0;transform:scaleX(0.9585);-webkit-text-stroke:0.18px #fff;">Find 1</div>
<div style="position:absolute;left:250px;top:992px;width:43px;height:8px;background:#4d6082;"></div>
<div class="t" style="left:252.70px;top:972.2px;font-size:14.8px;color:#fff;transform-origin:0 0;transform:scaleX(0.9659);-webkit-text-stroke:0.18px #fff;">Find 2</div>
<div style="position:absolute;left:299px;top:992px;width:104px;height:8px;background:#4d6082;"></div>
<div class="t" style="left:301.70px;top:972.2px;font-size:14.8px;color:#fff;transform-origin:0 0;transform:scaleX(0.9815);-webkit-text-stroke:0.18px #fff;">Communication</div>
<div style="position:absolute;left:409px;top:992px;width:105px;height:8px;background:#4d6082;"></div>
<div class="t" style="left:411.70px;top:972.2px;font-size:14.8px;color:#fff;transform-origin:0 0;transform:scaleX(0.9174);-webkit-text-stroke:0.18px #fff;">Cross Reference</div>
<div style="position:absolute;left:520px;top:992px;width:80px;height:8px;background:#4d6082;"></div>
<div class="t" style="left:522.70px;top:972.2px;font-size:14.8px;color:#fff;transform-origin:0 0;transform:scaleX(0.9222);-webkit-text-stroke:0.18px #fff;">Used Device</div>
<div style="position:absolute;left:606px;top:992px;width:93px;height:8px;background:#4d6082;"></div>
<div class="t" style="left:609.00px;top:972.2px;font-size:14.8px;color:#fff;transform-origin:0 0;transform:scaleX(0.9857);-webkit-text-stroke:0.18px #fff;">Duplicate Coil</div>
<div style="position:absolute;left:724px;top:992px;width:66px;height:8px;background:#4d6082;"></div>
<div class="t" style="left:726.70px;top:972.2px;font-size:14.8px;color:#fff;transform-origin:0 0;transform:scaleX(1.0179);-webkit-text-stroke:0.18px #fff;">Monitor 1</div>
<div style="position:absolute;left:796px;top:992px;width:67px;height:8px;background:#4d6082;"></div>
<div class="t" style="left:799.30px;top:972.2px;font-size:14.8px;color:#fff;transform-origin:0 0;transform:scaleX(1.0244);-webkit-text-stroke:0.18px #fff;">Monitor 2</div>
<div style="position:absolute;left:869px;top:992px;width:66px;height:8px;background:#4d6082;"></div>
<div class="t" style="left:871.70px;top:972.2px;font-size:14.8px;color:#fff;transform-origin:0 0;transform:scaleX(1.0293);-webkit-text-stroke:0.18px #fff;">Monitor 3</div>
<div style="position:absolute;left:941px;top:992px;width:67px;height:8px;background:#4d6082;"></div>
<div class="t" style="left:944.00px;top:972.2px;font-size:14.8px;color:#fff;transform-origin:0 0;transform:scaleX(1.0358);-webkit-text-stroke:0.18px #fff;">Monitor 4</div>
<div style="position:absolute;left:0px;top:1000px;width:1920px;height:27px;background:#007acc;"></div>
<div class="t" style="left:678.30px;top:1007.8px;font-size:14.8px;color:#fff;transform-origin:0 0;transform:scaleX(0.8704);-webkit-text-stroke:0.2px #fff;">NewPLC</div>
<div class="t" style="left:1060.70px;top:1007.8px;font-size:14.8px;color:#fff;transform-origin:0 0;transform:scaleX(0.9278);-webkit-text-stroke:0.2px #fff;">35 step</div>
<div class="t" style="left:1212.70px;top:1007.8px;font-size:14.8px;color:#fff;transform-origin:0 0;transform:scaleX(0.9412);-webkit-text-stroke:0.2px #fff;">Row 16, Col 4</div>
<div class="t" style="left:1365.70px;top:1007.8px;font-size:14.8px;color:#fff;transform-origin:0 0;transform:scaleX(0.9778);-webkit-text-stroke:0.2px #fff;">Overwrite</div>
<div class="t" style="left:1706.00px;top:1007.8px;font-size:14.8px;color:#fff;transform-origin:0 0;transform:scaleX(0.8662);-webkit-text-stroke:0.2px #fff;">150%</div>
<div style="position:absolute;left:1758px;top:1015px;width:11px;height:2px;background:#fff;"></div>
<div style="position:absolute;left:1781px;top:1015px;width:109px;height:1px;background:#8fa6c0;"></div>
<div style="position:absolute;left:1850px;top:1007px;width:6px;height:17px;background:#d0d4e4;border:1px solid #9aa;box-sizing:border-box;"></div>
<div style="position:absolute;left:1903px;top:1015px;width:11px;height:2px;background:#fff;"></div>
<div style="position:absolute;left:1907.5px;top:1010.5px;width:2px;height:11px;background:#fff;"></div>
<div style="position:absolute;left:1583.5px;top:1005px;width:25px;height:20px;background:#0f62a8;"></div>
<svg style="left:1534.0px;top:1006.6px" width="17" height="17" viewBox="0 0 16 16"><defs><linearGradient id="gd" x1="0" x2="1" y1="0" y2="1"><stop offset="0" stop-color="#f4fbf4"/><stop offset="0.6" stop-color="#c0e8c4"/><stop offset="1" stop-color="#a0d8a8"/></linearGradient></defs><path d="M1 1 H11.500 L15 4.500 V15 H1z" fill="url(#gd)" stroke="#111" stroke-width="1.400"/><path d="M11.500 1 V4.500 H15" fill="#fff" stroke="#111" stroke-width="0.900"/><path d="M3 4.500 L8 11.500 L13 4.500" fill="none" stroke="#b0b0a0" stroke-width="2.200" transform="translate(0.600 0.800)"/><path d="M3 4.500 L8 11.500 L13 4.500" fill="none" stroke="#ff7a10" stroke-width="2.200"/></svg>
<svg style="left:1560.0px;top:1006.6px" width="17" height="17" viewBox="0 0 16 16"><defs><linearGradient id="gd" x1="0" x2="1" y1="0" y2="1"><stop offset="0" stop-color="#f4fbf4"/><stop offset="0.6" stop-color="#c0e8c4"/><stop offset="1" stop-color="#a0d8a8"/></linearGradient></defs><path d="M1 1 H11.500 L15 4.500 V15 H1z" fill="url(#gd)" stroke="#111" stroke-width="1.400"/><path d="M11.500 1 V4.500 H15" fill="#fff" stroke="#111" stroke-width="0.900"/><text x="8" y="12.5" font-family="Liberation Sans, sans-serif" font-size="12" fill="#1080ff" text-anchor="middle" font-weight="bold" stroke="#1080ff" stroke-width="0.700" font-family="Liberation Serif, serif">D</text></svg>
<svg style="left:1587.5px;top:1006.6px" width="17" height="17" viewBox="0 0 16 16"><defs><linearGradient id="gd" x1="0" x2="1" y1="0" y2="1"><stop offset="0" stop-color="#f4fbf4"/><stop offset="0.6" stop-color="#c0e8c4"/><stop offset="1" stop-color="#a0d8a8"/></linearGradient></defs><path d="M1 1 H11.500 L15 4.500 V15 H1z" fill="url(#gd)" stroke="#111" stroke-width="1.400"/><path d="M11.500 1 V4.500 H15" fill="#fff" stroke="#111" stroke-width="0.900"/><text x="5.8" y="12.5" font-family="Liberation Sans, sans-serif" font-size="11.5" fill="#2088f0" text-anchor="middle" font-weight="bold" transform="scale(0.85 1)" transform-origin="5.8 8">D</text><path d="M8.500 6.500 L10.700 11 L13 5.500 M10.700 11 V14" fill="none" stroke="#f09040" stroke-width="1.500"/></svg>
<svg style="left:1615.0px;top:1006.6px" width="17" height="17" viewBox="0 0 16 16"><defs><linearGradient id="gd" x1="0" x2="1" y1="0" y2="1"><stop offset="0" stop-color="#f4fbf4"/><stop offset="0.6" stop-color="#c0e8c4"/><stop offset="1" stop-color="#a0d8a8"/></linearGradient></defs><path d="M1 1 H11.500 L15 4.500 V15 H1z" fill="url(#gd)" stroke="#111" stroke-width="1.400"/><path d="M11.500 1 V4.500 H15" fill="#fff" stroke="#111" stroke-width="0.900"/><text x="5.8" y="12.5" font-family="Liberation Sans, sans-serif" font-size="11.5" fill="#2088f0" text-anchor="middle" font-weight="bold" transform="scale(0.85 1)" transform-origin="5.8 8">D</text><path d="M13.500 8 Q10.500 5.500 9 9.500 Q9 13.800 13.500 12.500" fill="none" stroke="#f050d8" stroke-width="1.600"/></svg>
<svg style="left:1642.5px;top:1006.6px" width="17" height="17" viewBox="0 0 16 16"><defs><linearGradient id="gd" x1="0" x2="1" y1="0" y2="1"><stop offset="0" stop-color="#f4fbf4"/><stop offset="0.6" stop-color="#c0e8c4"/><stop offset="1" stop-color="#a0d8a8"/></linearGradient></defs><path d="M1 1 H11.500 L15 4.500 V15 H1z" fill="url(#gd)" stroke="#111" stroke-width="1.400"/><path d="M11.500 1 V4.500 H15" fill="#fff" stroke="#111" stroke-width="0.900"/><path d="M3 3.500 L5.500 11 L8 3.500" fill="none" stroke="#f08830" stroke-width="1.500"/><path d="M13.500 8 Q10.500 5.500 9 9.500 Q9 13.800 13.500 12.500" fill="none" stroke="#f050d8" stroke-width="1.600"/></svg>
<svg style="left:1670.0px;top:1006.6px" width="17" height="17" viewBox="0 0 16 16"><defs><linearGradient id="gd" x1="0" x2="1" y1="0" y2="1"><stop offset="0" stop-color="#f4fbf4"/><stop offset="0.6" stop-color="#c0e8c4"/><stop offset="1" stop-color="#a0d8a8"/></linearGradient></defs><path d="M1 1 H11.500 L15 4.500 V15 H1z" fill="url(#gd)" stroke="#111" stroke-width="1.400"/><path d="M11.500 1 V4.500 H15" fill="#fff" stroke="#111" stroke-width="0.900"/><text x="7.8" y="13.3" font-family="Liberation Sans, sans-serif" font-size="13.5" fill="#0a0a0a" text-anchor="middle" font-weight="bold" stroke="#0a0a0a" stroke-width="0.500">A</text></svg>
<svg style="left:1456px;top:1004px" width="18" height="22" viewBox="0 0 18 22"><path d="M5 10 V6.500 Q5 2.500 9 2.500 Q13 2.500 13 6.500 V10" fill="none" stroke="#6f9fd0" stroke-width="2"/><rect x="1.200" y="9.500" width="15.600" height="10.800" rx="1.200" fill="#8fa866" stroke="#7d9658" stroke-width="1"/><rect x="8.200" y="13.500" width="1.600" height="2" fill="#2a4a6a"/></svg>
<svg style="left:1498px;top:1005.500px" width="19" height="19" viewBox="0 0 19 19"><path d="M9.500 0.800 L11.500 3 L14.500 2.500 L15 5.500 L17.800 7 L16.500 9.500 L17.800 12 L15 13.500 L14.500 16.500 L11.500 16 L9.500 18.200 L7.500 16 L4.500 16.500 L4 13.500 L1.200 12 L2.500 9.500 L1.200 7 L4 5.500 L4.500 2.500 L7.500 3z" fill="#45aef0" stroke="#3a9ee0" stroke-width="0.800" stroke-dasharray="1 0.800"/><path d="M6.500 6.500 L12.500 12.500 M12.500 6.500 L6.500 12.500" stroke="#a8d4f6" stroke-width="2.600" stroke-linecap="round"/></svg>
</body></html>
